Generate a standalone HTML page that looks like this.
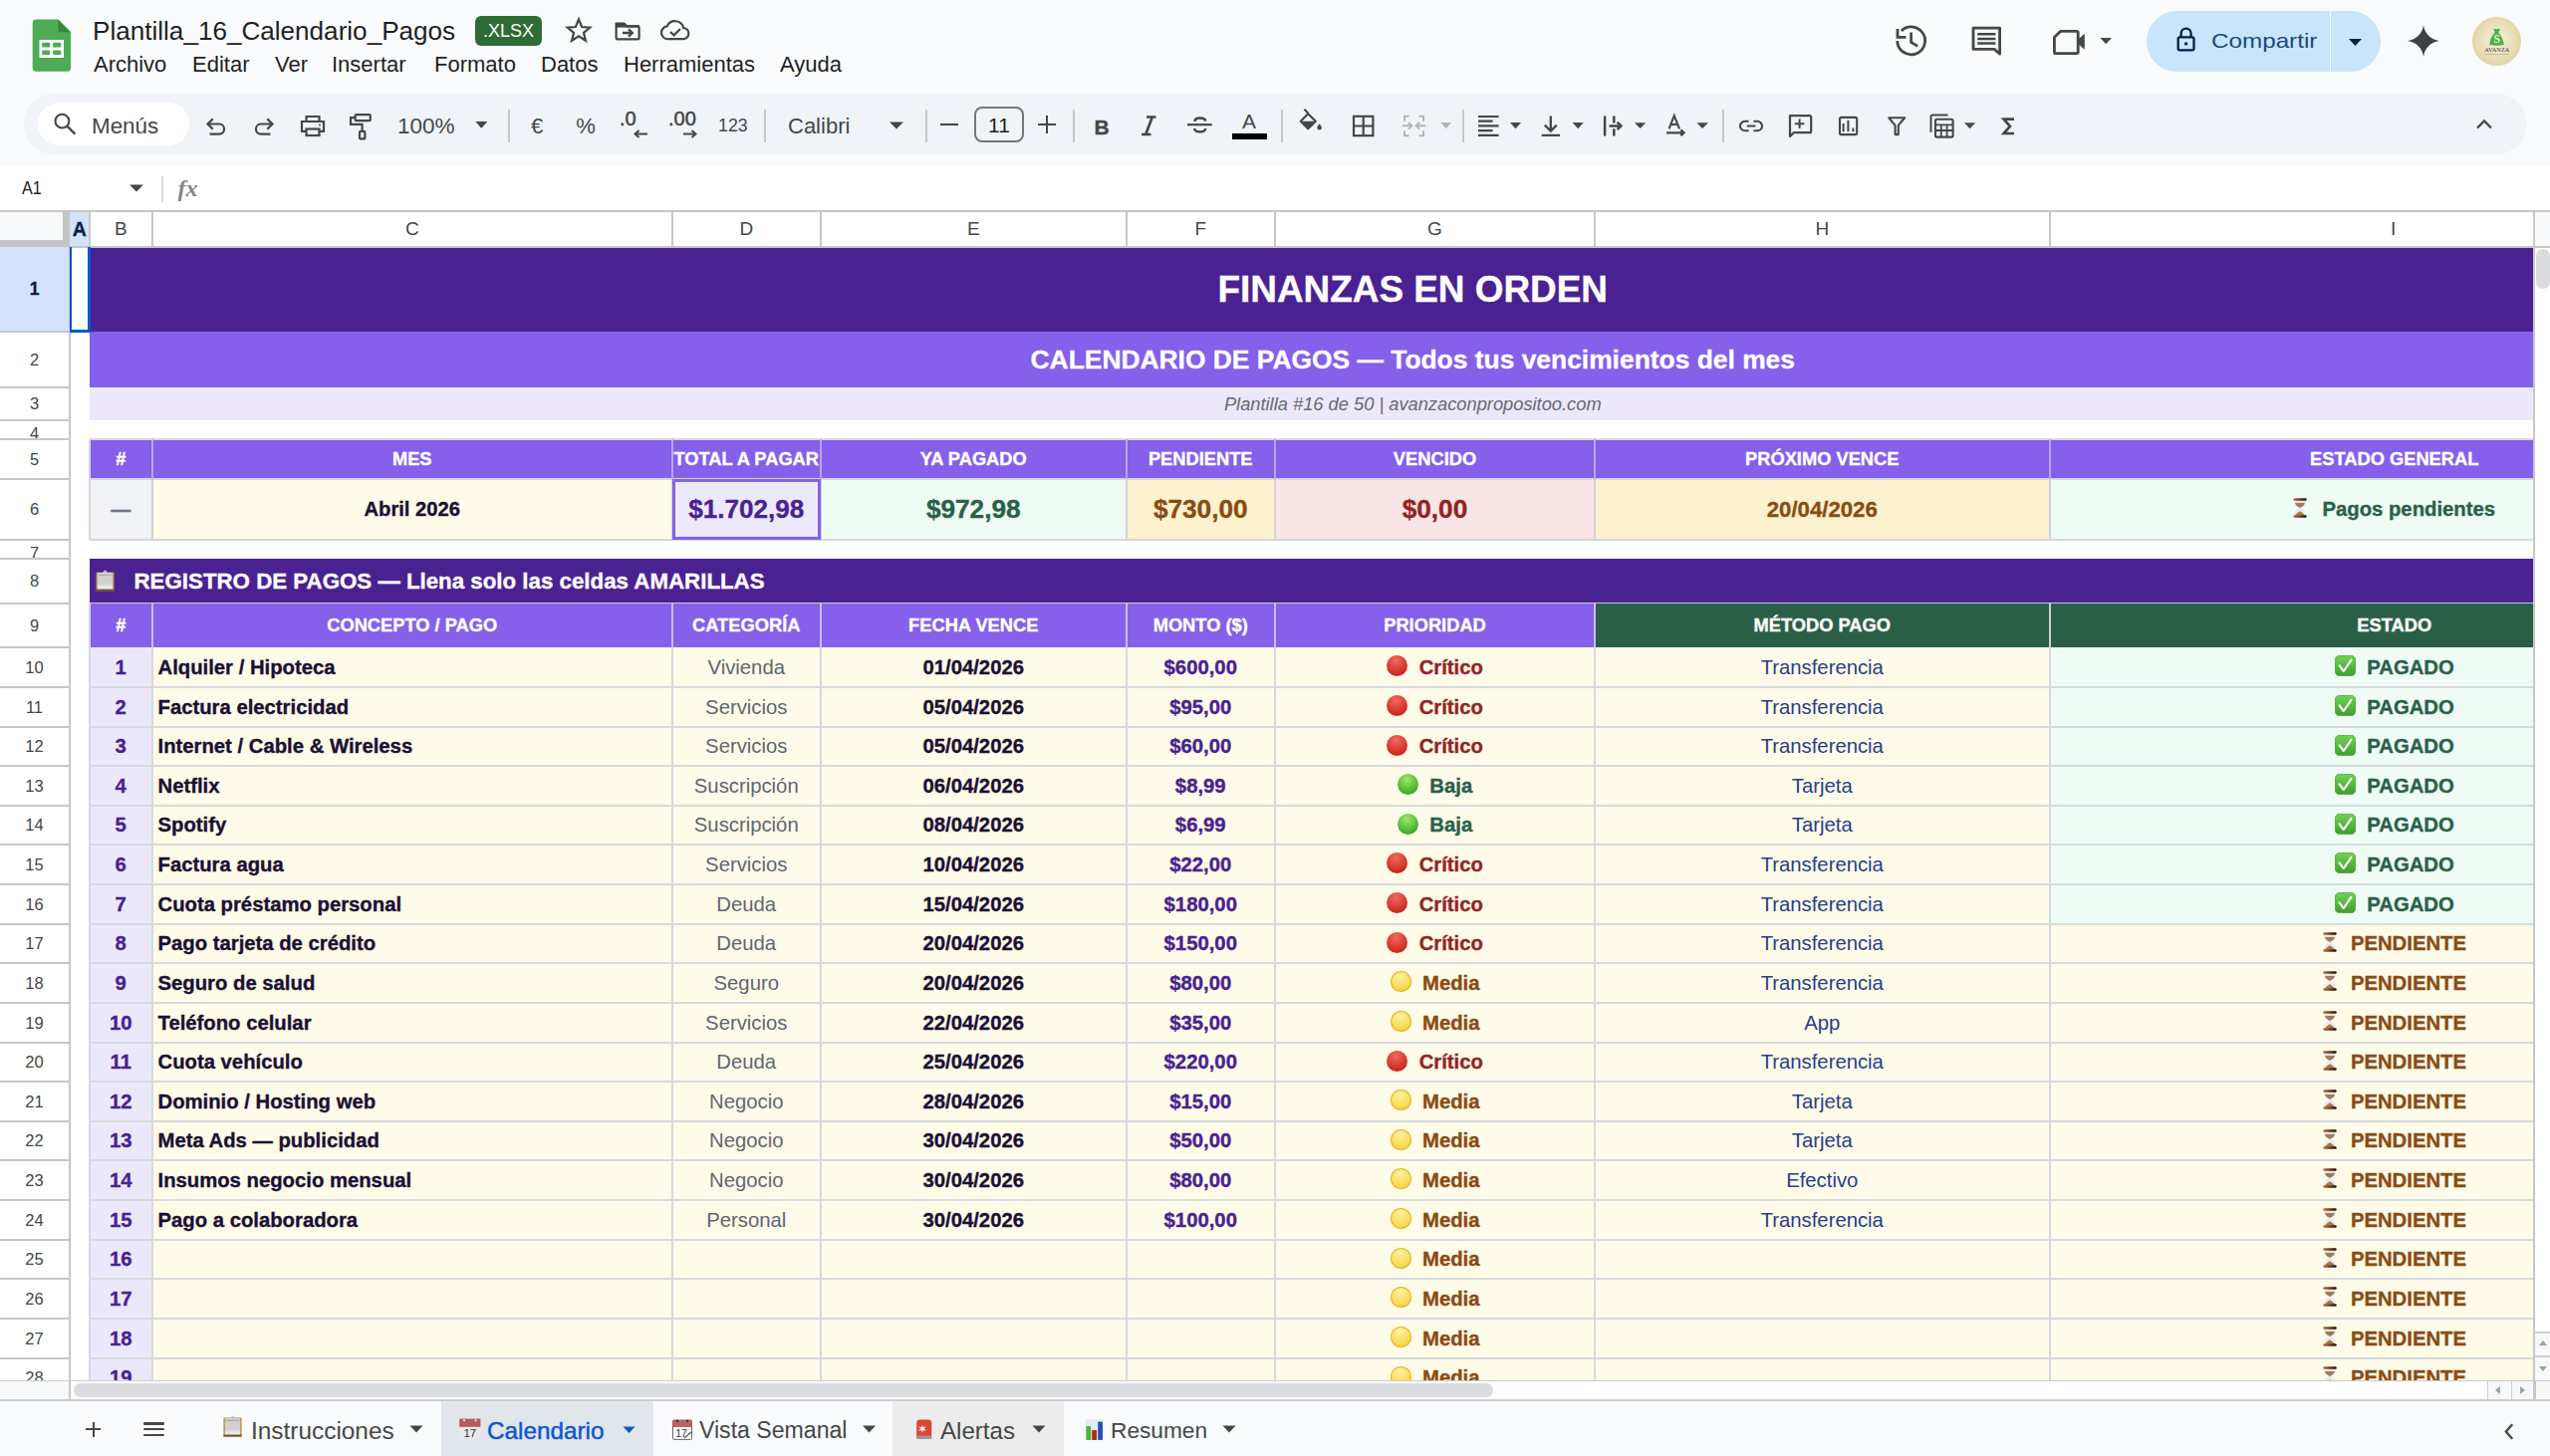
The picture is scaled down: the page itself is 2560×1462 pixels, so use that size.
<!DOCTYPE html><html><head><meta charset="utf-8"><style>html,body{margin:0;padding:0;width:2560px;height:1462px;overflow:hidden;background:#fff;}body{position:relative;font-family:'Liberation Sans', sans-serif;}div{box-sizing:border-box;}</style></head><body>
<div style="position:absolute;left:0px;top:0px;width:2560px;height:167px;background:#f9fbfd;"></div>
<svg style="position:absolute;left:32px;top:19px" width="40" height="54" viewBox="32 19 40 54"><path d="M36.3 19.4H58.3L71 32.2V68.2A3.6 3.6 0 0 1 67.4 71.8H36.3A3.6 3.6 0 0 1 32.7 68.2V23A3.6 3.6 0 0 1 36.3 19.4Z" fill="#4eab56"/><path d="M58.3 19.4L71 32.2H58.3Z" fill="#3a883b"/><rect x="39.5" y="40" width="24.5" height="18" fill="#fff"/><rect x="42.2" y="42.8" width="8" height="4.6" rx="0.5" fill="#4eab56"/><rect x="53.2" y="42.8" width="8" height="4.6" rx="0.5" fill="#4eab56"/><rect x="42.2" y="50.4" width="8" height="4.6" rx="0.5" fill="#4eab56"/><rect x="53.2" y="50.4" width="8" height="4.6" rx="0.5" fill="#4eab56"/></svg>
<div style="position:absolute;left:93px;top:12px;width:387px;height:38px;display:flex;align-items:center;justify-content:flex-start;font-family:'Liberation Sans', sans-serif;font-size:26.1px;color:#1f1f1f;font-weight:normal;white-space:nowrap;overflow:hidden;padding-left:0px;box-sizing:border-box;">Plantilla_16_Calendario_Pagos</div>
<div style="position:absolute;left:477px;top:16px;width:67px;height:30px;background:#2f6b35;border-radius:6px;"></div>
<div style="position:absolute;left:477px;top:16px;width:67px;height:31px;display:flex;align-items:center;justify-content:center;font-family:'Liberation Sans', sans-serif;font-size:18px;color:#fff;font-weight:normal;white-space:nowrap;overflow:hidden;padding-left:0px;box-sizing:border-box;">.XLSX</div>
<div style="position:absolute;left:94px;top:50px;width:201px;height:30px;display:flex;align-items:center;justify-content:flex-start;font-family:'Liberation Sans', sans-serif;font-size:22.0px;color:#1f1f1f;font-weight:normal;white-space:nowrap;overflow:hidden;padding-left:0px;box-sizing:border-box;">Archivo</div>
<div style="position:absolute;left:193px;top:50px;width:201px;height:30px;display:flex;align-items:center;justify-content:flex-start;font-family:'Liberation Sans', sans-serif;font-size:22.0px;color:#1f1f1f;font-weight:normal;white-space:nowrap;overflow:hidden;padding-left:0px;box-sizing:border-box;">Editar</div>
<div style="position:absolute;left:276px;top:50px;width:201px;height:30px;display:flex;align-items:center;justify-content:flex-start;font-family:'Liberation Sans', sans-serif;font-size:22.0px;color:#1f1f1f;font-weight:normal;white-space:nowrap;overflow:hidden;padding-left:0px;box-sizing:border-box;">Ver</div>
<div style="position:absolute;left:333px;top:50px;width:201px;height:30px;display:flex;align-items:center;justify-content:flex-start;font-family:'Liberation Sans', sans-serif;font-size:22.0px;color:#1f1f1f;font-weight:normal;white-space:nowrap;overflow:hidden;padding-left:0px;box-sizing:border-box;">Insertar</div>
<div style="position:absolute;left:436px;top:50px;width:201px;height:30px;display:flex;align-items:center;justify-content:flex-start;font-family:'Liberation Sans', sans-serif;font-size:22.0px;color:#1f1f1f;font-weight:normal;white-space:nowrap;overflow:hidden;padding-left:0px;box-sizing:border-box;">Formato</div>
<div style="position:absolute;left:543px;top:50px;width:201px;height:30px;display:flex;align-items:center;justify-content:flex-start;font-family:'Liberation Sans', sans-serif;font-size:22.0px;color:#1f1f1f;font-weight:normal;white-space:nowrap;overflow:hidden;padding-left:0px;box-sizing:border-box;">Datos</div>
<div style="position:absolute;left:626px;top:50px;width:201px;height:30px;display:flex;align-items:center;justify-content:flex-start;font-family:'Liberation Sans', sans-serif;font-size:22.0px;color:#1f1f1f;font-weight:normal;white-space:nowrap;overflow:hidden;padding-left:0px;box-sizing:border-box;">Herramientas</div>
<div style="position:absolute;left:783px;top:50px;width:201px;height:30px;display:flex;align-items:center;justify-content:flex-start;font-family:'Liberation Sans', sans-serif;font-size:22.0px;color:#1f1f1f;font-weight:normal;white-space:nowrap;overflow:hidden;padding-left:0px;box-sizing:border-box;">Ayuda</div>
<div style="position:absolute;left:2155px;top:11px;width:235px;height:61px;background:#c9e5fb;border-radius:31px;"></div>
<div style="position:absolute;left:2339px;top:11px;width:1.4px;height:61px;background:#f9fbfd;"></div>
<svg style="position:absolute;left:2150px;top:20px" width="60" height="40" viewBox="2150 20 60 40"><rect x="2186.7" y="37.4" width="15.8" height="13" rx="1.6" fill="none" stroke="#041e49" stroke-width="2.3"/><path d="M2189.6 37.4V33.6a5 5 0 0 1 10 0V37.4" fill="none" stroke="#041e49" stroke-width="2.3"/><circle cx="2194.6" cy="43.9" r="1.6" fill="#041e49"/></svg>
<div style="position:absolute;left:2219.6px;top:10px;width:115.40000000000009px;height:61px;display:flex;align-items:center;justify-content:flex-start;font-family:'Liberation Sans', sans-serif;font-size:20.9px;color:#1b4a7a;font-weight:normal;white-space:nowrap;overflow:hidden;padding-left:0px;box-sizing:border-box;transform:scaleX(1.16);transform-origin:0 50%;">Compartir</div>
<svg style="position:absolute;left:2358px;top:39px" width="13" height="7" viewBox="0 0 13 7"><path d="M0 0h13L6.5 7z" fill="#041e49"/></svg>
<svg style="position:absolute;left:2417px;top:25px" width="32" height="32" viewBox="0 0 24 24"><path d="M12 0C12.8 6.5 17.5 11.2 24 12 17.5 12.8 12.8 17.5 12 24 11.2 17.5 6.5 12.8 0 12 6.5 11.2 11.2 6.5 12 0z" fill="#3c4043"/></svg>
<div style="position:absolute;left:2482px;top:16.8px;width:49px;height:49px;border-radius:50%;background:radial-gradient(circle at 50% 48%,#f7f0de 0%,#e8dcb6 55%,#d3c18c 100%);"></div>
<svg style="position:absolute;left:2480px;top:14px" width="54" height="54" viewBox="2480 14 54 54"><path d="M2503.2 29.2c1.2-.6 2.2.4 3.3-.2 1.1.5 2.3-.4 3.4.4l-1.8 3.3c.8.2 1.2.6 1 1.2 2 1.6 3.6 5.4 4.9 11.1-3.6.9-10.6.9-14.6 0 .5-5.2 2-9.4 4.6-11.2-.3-.6.1-1 .9-1.2z" fill="#48b443"/><text x="2506.8" y="42.6" font-size="11.5" text-anchor="middle" fill="#f4fbf2" font-family="Liberation Serif" font-weight="bold">S</text><text x="2506.8" y="52.2" font-size="6.2" text-anchor="middle" fill="#3d3a33" font-family="Liberation Serif" textLength="25" lengthAdjust="spacingAndGlyphs">AVANZA</text><rect x="2495" y="54" width="23.5" height="0.8" fill="#b9ad8a"/></svg>
<div style="position:absolute;left:24px;top:94px;width:2513px;height:61px;background:#f0f4f9;border-radius:31px;"></div>
<div style="position:absolute;left:38px;top:103px;width:152px;height:43px;background:#fff;border-radius:22px;"></div>
<div style="position:absolute;left:92px;top:105px;width:98px;height:43px;display:flex;align-items:center;justify-content:flex-start;font-family:'Liberation Sans', sans-serif;font-size:22.4px;color:#444746;font-weight:normal;white-space:nowrap;overflow:hidden;padding-left:0px;box-sizing:border-box;">Menús</div>
<div style="position:absolute;left:399px;top:105px;width:71px;height:43px;display:flex;align-items:center;justify-content:flex-start;font-family:'Liberation Sans', sans-serif;font-size:22.5px;color:#444746;font-weight:normal;white-space:nowrap;overflow:hidden;padding-left:0px;box-sizing:border-box;">100%</div>
<div style="position:absolute;left:509.5px;top:110px;width:2px;height:33px;background:#c7c7c7;"></div>
<div style="position:absolute;left:767px;top:110px;width:2px;height:33px;background:#c7c7c7;"></div>
<div style="position:absolute;left:928.5px;top:110px;width:2px;height:33px;background:#c7c7c7;"></div>
<div style="position:absolute;left:1076.5px;top:110px;width:2px;height:33px;background:#c7c7c7;"></div>
<div style="position:absolute;left:1285.5px;top:110px;width:2px;height:33px;background:#c7c7c7;"></div>
<div style="position:absolute;left:1467.5px;top:110px;width:2px;height:33px;background:#c7c7c7;"></div>
<div style="position:absolute;left:1728.5px;top:110px;width:2px;height:33px;background:#c7c7c7;"></div>
<div style="position:absolute;left:522px;top:105px;width:34px;height:43px;display:flex;align-items:center;justify-content:center;font-family:'Liberation Sans', sans-serif;font-size:22px;color:#444746;font-weight:normal;white-space:nowrap;overflow:hidden;padding-left:0px;box-sizing:border-box;">€</div>
<div style="position:absolute;left:570px;top:105px;width:36px;height:43px;display:flex;align-items:center;justify-content:center;font-family:'Liberation Sans', sans-serif;font-size:22px;color:#444746;font-weight:normal;white-space:nowrap;overflow:hidden;padding-left:0px;box-sizing:border-box;">%</div>
<div style="position:absolute;left:622px;top:98px;width:58px;height:42px;display:flex;align-items:center;justify-content:flex-start;font-family:'Liberation Sans', sans-serif;font-size:20px;color:#444746;font-weight:normal;white-space:nowrap;overflow:hidden;padding-left:0px;box-sizing:border-box;-webkit-text-stroke:0.5px #444746;">.0</div>
<svg style="position:absolute;left:636.0px;top:130.0px" width="15" height="9" viewBox="0 0 15 9"><path d="M14 4.5H2M5.5 1L1.5 4.5 5.5 8" fill="none" stroke="#444746" stroke-width="2"/></svg>
<div style="position:absolute;left:671px;top:98px;width:59px;height:42px;display:flex;align-items:center;justify-content:flex-start;font-family:'Liberation Sans', sans-serif;font-size:20px;color:#444746;font-weight:normal;white-space:nowrap;overflow:hidden;padding-left:0px;box-sizing:border-box;-webkit-text-stroke:0.5px #444746;">.00</div>
<svg style="position:absolute;left:684.5px;top:130.0px" width="15" height="9" viewBox="0 0 15 9"><path d="M1 4.5h12M9.5 1l4 3.5-4 3.5" fill="none" stroke="#444746" stroke-width="2"/></svg>
<div style="position:absolute;left:721px;top:105px;width:39px;height:43px;display:flex;align-items:center;justify-content:flex-start;font-family:'Liberation Sans', sans-serif;font-size:17.8px;color:#444746;font-weight:normal;white-space:nowrap;overflow:hidden;padding-left:0px;box-sizing:border-box;">123</div>
<div style="position:absolute;left:791px;top:105px;width:89px;height:43px;display:flex;align-items:center;justify-content:flex-start;font-family:'Liberation Sans', sans-serif;font-size:22px;color:#444746;font-weight:normal;white-space:nowrap;overflow:hidden;padding-left:0px;box-sizing:border-box;">Calibri</div>
<svg style="position:absolute;left:893.0px;top:122.0px" width="14" height="8" viewBox="0 0 10 5"><path d="M0 0h10L5 5z" fill="#444746"/></svg>
<div style="position:absolute;left:944px;top:124px;width:18px;height:2.4px;background:#444746;"></div>
<div style="position:absolute;left:978px;top:107px;width:50px;height:36px;border:2px solid #747775;border-radius:8px;"></div>
<div style="position:absolute;left:978px;top:108px;width:50px;height:36px;display:flex;align-items:center;justify-content:center;font-family:'Liberation Sans', sans-serif;font-size:21px;color:#1f1f1f;font-weight:normal;white-space:nowrap;overflow:hidden;padding-left:0px;box-sizing:border-box;">11</div>
<div style="position:absolute;left:1042px;top:124px;width:18px;height:2.4px;background:#444746;"></div>
<div style="position:absolute;left:1050px;top:116px;width:2.4px;height:18px;background:#444746;"></div>
<div style="position:absolute;left:1090px;top:106px;width:32px;height:43px;display:flex;align-items:center;justify-content:center;font-family:'Liberation Sans', sans-serif;font-size:21px;color:#444746;font-weight:bold;white-space:nowrap;overflow:hidden;padding-left:0px;box-sizing:border-box;-webkit-text-stroke:0.35px #444746;">B</div>
<svg style="position:absolute;left:1185px;top:112px" width="40" height="28" viewBox="1185 112 40 28"><path d="M1192 125.2H1216.7" stroke="#444746" stroke-width="2.2"/><path d="M1210.2 121.6C1209.6 117.6 1199.8 117.4 1199.4 121.8" fill="none" stroke="#444746" stroke-width="2.6"/><path d="M1199.2 129C1199.6 133.6 1209.8 133.6 1210.2 129" fill="none" stroke="#444746" stroke-width="2.6"/></svg>
<div style="position:absolute;left:1238px;top:102px;width:32px;height:40px;display:flex;align-items:center;justify-content:center;font-family:'Liberation Sans', sans-serif;font-size:21px;color:#444746;font-weight:normal;white-space:nowrap;overflow:hidden;padding-left:0px;box-sizing:border-box;">A</div>
<div style="position:absolute;left:1237px;top:134px;width:35px;height:6px;background:#000;"></div>
<svg style="position:absolute;left:0;top:0" width="2560" height="160" viewBox="0 0 2560 160"><polygon points="581.00,19.40 584.06,26.99 592.22,27.55 585.95,32.81 587.94,40.75 581.00,36.40 574.06,40.75 576.05,32.81 569.78,27.55 577.94,26.99" fill="none" stroke="#444746" stroke-width="2.2" stroke-linejoin="miter"/><path d="M618.6 23.5h8l3 3h10.6a1.4 1.4 0 0 1 1.4 1.4V38a1.4 1.4 0 0 1-1.4 1.4H620a1.4 1.4 0 0 1-1.4-1.4z" fill="none" stroke="#444746" stroke-width="2.2"/><path d="M618.6 23.5h8l3 3h-11z" fill="#444746"/><rect x="618.6" y="25" width="23" height="2.6" fill="#444746"/><path d="M625 33h9.5M631 29.3l3.8 3.7-3.8 3.7" fill="none" stroke="#444746" stroke-width="2.4"/><path d="M671 39.2h14.5a5.6 5.6 0 0 0 .6-11.2 8.6 8.6 0 0 0-16.3-1.6 6.4 6.4 0 0 0 1.2 12.8z" fill="none" stroke="#444746" stroke-width="2.2"/><path d="M673 32l3.6 3.4 6.4-6.4" fill="none" stroke="#444746" stroke-width="2.2"/><path d="M1904.8 40.9A13.9 13.9 0 1 0 1908.9 31" fill="none" stroke="#444746" stroke-width="2.8"/><path d="M1905 29v8.4h8.4" fill="none" stroke="#444746" stroke-width="2.8"/><path d="M1918.6 32.4v10l6.6 4" fill="none" stroke="#444746" stroke-width="2.7"/><path d="M1981 28.2h26.6v26l-5.4-4.8H1981z" fill="none" stroke="#444746" stroke-width="2.8" stroke-linejoin="round"/><path d="M1985.2 34.3h18.2M1985.2 39h18.2M1985.2 43.5h18.2" stroke="#444746" stroke-width="2.6"/><path d="M2068.5 31.4h16.3a1.4 1.4 0 0 1 1.4 1.4v19.4a1.4 1.4 0 0 1-1.4 1.4h-21a1.4 1.4 0 0 1-1.4-1.4V37.6z" fill="none" stroke="#444746" stroke-width="2.8" stroke-linejoin="round"/><path d="M2086 39.8l6.8-6v16l-6.8-6z" fill="#444746"/><path d="M2108.4 38H2120L2114.2 44.2z" fill="#444746"/><circle cx="62.4" cy="121.6" r="6.9" fill="none" stroke="#444746" stroke-width="2.1"/><path d="M67.4 126.6l8 8" stroke="#444746" stroke-width="2.3"/><path d="M208.5 124.5H220a5.1 5.1 0 0 1 0 10.2h-9.5" fill="none" stroke="#444746" stroke-width="2.2"/><path d="M213.7 119.4l-5.2 5.1 5.2 5.1" fill="none" stroke="#444746" stroke-width="2.2"/><path d="M273.5 124.5H262a5.1 5.1 0 0 0 0 10.2h9.5" fill="none" stroke="#444746" stroke-width="2.2"/><path d="M268.3 119.4l5.2 5.1-5.2 5.1" fill="none" stroke="#444746" stroke-width="2.2"/><path d="M307.5 122V117h13v5M307.5 131.8h-4.5v-9.8h22v9.8h-4.5" fill="none" stroke="#444746" stroke-width="2.2"/><rect x="307.5" y="129.5" width="13" height="6.5" fill="none" stroke="#444746" stroke-width="2.2"/><circle cx="321" cy="125.4" r="1" fill="#444746"/><rect x="356.6" y="115.2" width="15.2" height="6" rx="1" fill="none" stroke="#444746" stroke-width="2.2"/><path d="M356.6 118.2H352v6.6h11.6v7" fill="none" stroke="#444746" stroke-width="2.2"/><rect x="361" y="131.8" width="5.4" height="7.6" rx="1" fill="none" stroke="#444746" stroke-width="2.2"/><path d="M477.3 122H489.3L483.3 128.7z" fill="#444746"/><path d="M1151 117.5h9.5M1146 135h9.5M1156.8 117.5l-6.6 17.5" fill="none" stroke="#444746" stroke-width="2.7"/><path d="M1313.2 114.3l7.6 7.4-7.6 7.4-7.4-7.4z" fill="none" stroke="#444746" stroke-width="2.2" stroke-linejoin="round"/><path d="M1305.8 121.7h15l-7.6 7.4z" fill="#444746"/><path d="M1309.5 109.8l4 4.2" stroke="#444746" stroke-width="2.2"/><path d="M1324.6 124.2c1.6 2 2.3 3 2.3 4a2.3 2.3 0 0 1-4.6 0c0-1 .7-2 2.3-4z" fill="#444746"/><rect x="1359" y="116.8" width="19.4" height="19.4" fill="none" stroke="#444746" stroke-width="2.2"/><path d="M1368.7 116.8v19.4M1359 126.5h19.4" stroke="#444746" stroke-width="2.2"/><path d="M1414.5 116.8h-4.5v5M1410 131.2v5h4.5M1424.5 116.8h4.5v5M1429 131.2v5h-4.5" fill="none" stroke="#b3b6b8" stroke-width="2"/><path d="M1407.8 126.3h9.2M1414 123l3.3 3.3-3.3 3.3M1431.2 126.3h-9.2M1425 123l-3.3 3.3 3.3 3.3" fill="none" stroke="#b3b6b8" stroke-width="2"/><path d="M1446.2 123H1457.2L1451.7 129.2z" fill="#b3b6b8"/><path d="M1484 117h20.6M1484 121.7h14.6M1484 126.4h20.6M1484 131.1h14.6M1484 135.8h20.6" stroke="#444746" stroke-width="2.2"/><path d="M1516 123H1527L1521.5 129.2z" fill="#444746"/><path d="M1556.8 116.4v15.5M1550.8 125.6l6 6 6-6M1547.7 135.9h18.3" fill="none" stroke="#444746" stroke-width="2.3"/><path d="M1578.7 123H1589.7L1584.2 129.2z" fill="#444746"/><path d="M1611.1 117.4v18M1620.3 117.4v5.2M1620.3 130.2v5.2" stroke="#444746" stroke-width="2.5" stroke-linecap="round"/><path d="M1615.5 126.4h11.5M1623.6 122.7l3.8 3.7-3.8 3.7" fill="none" stroke="#444746" stroke-width="2.5"/><path d="M1641 123.3H1652.2L1646.6 129.1z" fill="#444746"/><path d="M1675.6 129.4l5.2-13.3 5.2 13.3M1677.4 125h6.8" fill="none" stroke="#444746" stroke-width="2.1"/><path d="M1673 133.3h17.2M1687.4 130.4l3.1 2.9-3.1 2.9" fill="none" stroke="#444746" stroke-width="2.3"/><path d="M1703.3 123.3H1714.9L1709.1 129.1z" fill="#444746"/><path d="M1755.6 121.8h-3.9a4.7 4.7 0 0 0 0 9.4h3.9M1760.4 121.8h3.9a4.7 4.7 0 0 1 0 9.4h-3.9M1753.8 126.5h8.6" fill="none" stroke="#444746" stroke-width="2.1"/><path d="M1797 116.2h20a1.2 1.2 0 0 1 1.2 1.2v14.6a1.2 1.2 0 0 1-1.2 1.2h-16.3l-3.7 3.8z" fill="none" stroke="#444746" stroke-width="2.2" stroke-linejoin="round"/><path d="M1806.6 119.5v9.6M1801.8 124.3h9.6" stroke="#444746" stroke-width="2"/><rect x="1847" y="117.9" width="17.2" height="17.2" rx="1.6" fill="none" stroke="#444746" stroke-width="2.1"/><path d="M1850.6 123.9v8.4M1855.4 120.8v11.5M1860.4 128.4v3.9" stroke="#444746" stroke-width="2"/><path d="M1896.2 118.3h16l-6.4 7.6v9.2h-3.2v-9.2z" fill="none" stroke="#444746" stroke-width="2.1" stroke-linejoin="round"/><path d="M1938.5 132.8V117a1.6 1.6 0 0 1 1.6-1.6h15.4" fill="none" stroke="#444746" stroke-width="2"/><rect x="1943" y="119.8" width="17.6" height="17.8" rx="1.6" fill="none" stroke="#444746" stroke-width="2.1"/><path d="M1943 125.4h17.6M1943 131h17.6M1948.8 125.4v12.2M1954.6 125.4v12.2" stroke="#444746" stroke-width="1.8"/><path d="M1972 123.2H1983.2L1977.6 129.2z" fill="#444746"/><path d="M2022 119.6h-10.4l6.3 7.2-6.3 7.2h10.4" fill="none" stroke="#444746" stroke-width="2.7" stroke-linejoin="miter"/><path d="M2487 128.5l7-7 7 7" fill="none" stroke="#444746" stroke-width="2.3"/></svg>
<div style="position:absolute;left:0px;top:167px;width:2560px;height:44px;background:#fff;"></div>
<div style="position:absolute;left:21.5px;top:167px;width:58.5px;height:44px;display:flex;align-items:center;justify-content:flex-start;font-family:'Liberation Sans', sans-serif;font-size:19px;color:#1f1f1f;font-weight:normal;white-space:nowrap;overflow:hidden;padding-left:0px;box-sizing:border-box;transform:scaleX(0.85);transform-origin:0 50%;">A1</div>
<svg style="position:absolute;left:130.0px;top:185.0px" width="14" height="8" viewBox="0 0 10 5"><path d="M0 0h10L5 5z" fill="#444746"/></svg>
<div style="position:absolute;left:162px;top:177px;width:2px;height:26px;background:#dadce0;"></div>
<div style="position:absolute;left:178.5px;top:167px;width:36.5px;height:44px;display:flex;align-items:center;justify-content:flex-start;font-family:'Liberation Sans', sans-serif;font-size:24px;color:#80868b;font-weight:normal;white-space:nowrap;overflow:hidden;padding-left:0px;box-sizing:border-box;font-family:'Liberation Serif';font-style:italic;font-weight:bold;">fx</div>
<div style="position:absolute;left:0px;top:211px;width:2560px;height:2px;background:#c7c7c7;"></div>
<div style="position:absolute;left:0px;top:213px;width:2544px;height:35px;background:#fff;"></div>
<div style="position:absolute;left:0px;top:213px;width:63px;height:28px;background:#f8f9fa;"></div>
<div style="position:absolute;left:63px;top:213px;width:7px;height:35px;background:#c4c7c5;"></div>
<div style="position:absolute;left:0px;top:241px;width:70px;height:7px;background:#c4c7c5;"></div>
<div style="position:absolute;left:70px;top:213px;width:20px;height:35px;background:#d3e3fd;"></div>
<div style="position:absolute;left:70px;top:213px;width:19.5px;height:34px;display:flex;align-items:center;justify-content:center;font-family:'Liberation Sans', sans-serif;font-size:19.5px;color:#041e49;font-weight:bold;white-space:nowrap;overflow:hidden;padding-left:0px;box-sizing:border-box;-webkit-text-stroke:0.35px #041e49;">A</div>
<div style="position:absolute;left:89.5px;top:213px;width:63.5px;height:34px;display:flex;align-items:center;justify-content:center;font-family:'Liberation Sans', sans-serif;font-size:19px;color:#444746;font-weight:normal;white-space:nowrap;overflow:hidden;padding-left:0px;box-sizing:border-box;">B</div>
<div style="position:absolute;left:88.5px;top:213px;width:2px;height:35px;background:#c7c7c7;"></div>
<div style="position:absolute;left:153px;top:213px;width:521.5px;height:34px;display:flex;align-items:center;justify-content:center;font-family:'Liberation Sans', sans-serif;font-size:19px;color:#444746;font-weight:normal;white-space:nowrap;overflow:hidden;padding-left:0px;box-sizing:border-box;">C</div>
<div style="position:absolute;left:152px;top:213px;width:2px;height:35px;background:#c7c7c7;"></div>
<div style="position:absolute;left:674.5px;top:213px;width:149.5px;height:34px;display:flex;align-items:center;justify-content:center;font-family:'Liberation Sans', sans-serif;font-size:19px;color:#444746;font-weight:normal;white-space:nowrap;overflow:hidden;padding-left:0px;box-sizing:border-box;">D</div>
<div style="position:absolute;left:673.5px;top:213px;width:2px;height:35px;background:#c7c7c7;"></div>
<div style="position:absolute;left:824px;top:213px;width:306.5px;height:34px;display:flex;align-items:center;justify-content:center;font-family:'Liberation Sans', sans-serif;font-size:19px;color:#444746;font-weight:normal;white-space:nowrap;overflow:hidden;padding-left:0px;box-sizing:border-box;">E</div>
<div style="position:absolute;left:823px;top:213px;width:2px;height:35px;background:#c7c7c7;"></div>
<div style="position:absolute;left:1130.5px;top:213px;width:149.5px;height:34px;display:flex;align-items:center;justify-content:center;font-family:'Liberation Sans', sans-serif;font-size:19px;color:#444746;font-weight:normal;white-space:nowrap;overflow:hidden;padding-left:0px;box-sizing:border-box;">F</div>
<div style="position:absolute;left:1129.5px;top:213px;width:2px;height:35px;background:#c7c7c7;"></div>
<div style="position:absolute;left:1280px;top:213px;width:321px;height:34px;display:flex;align-items:center;justify-content:center;font-family:'Liberation Sans', sans-serif;font-size:19px;color:#444746;font-weight:normal;white-space:nowrap;overflow:hidden;padding-left:0px;box-sizing:border-box;">G</div>
<div style="position:absolute;left:1279px;top:213px;width:2px;height:35px;background:#c7c7c7;"></div>
<div style="position:absolute;left:1601px;top:213px;width:456.5px;height:34px;display:flex;align-items:center;justify-content:center;font-family:'Liberation Sans', sans-serif;font-size:19px;color:#444746;font-weight:normal;white-space:nowrap;overflow:hidden;padding-left:0px;box-sizing:border-box;">H</div>
<div style="position:absolute;left:1600px;top:213px;width:2px;height:35px;background:#c7c7c7;"></div>
<div style="position:absolute;left:2057.5px;top:213px;width:690.5px;height:34px;display:flex;align-items:center;justify-content:center;font-family:'Liberation Sans', sans-serif;font-size:19px;color:#444746;font-weight:normal;white-space:nowrap;overflow:hidden;padding-left:0px;box-sizing:border-box;">I</div>
<div style="position:absolute;left:2056.5px;top:213px;width:2px;height:35px;background:#c7c7c7;"></div>
<div style="position:absolute;left:2543px;top:213px;width:2px;height:35px;background:#c7c7c7;"></div>
<div style="position:absolute;left:0px;top:247px;width:2544px;height:2px;background:#c7c7c7;"></div>
<div style="position:absolute;left:0px;top:248px;width:70px;height:1138px;background:#fff;"></div>
<div style="position:absolute;left:0px;top:248px;width:69px;height:85px;background:#d3e3fd;"></div>
<div style="position:absolute;left:0px;top:248px;width:69px;height:85px;display:flex;align-items:center;justify-content:center;font-family:'Liberation Sans', sans-serif;font-size:17.5px;color:#041e49;font-weight:bold;white-space:nowrap;overflow:hidden;padding-left:0px;box-sizing:border-box;-webkit-text-stroke:0.35px #041e49;">1</div>
<div style="position:absolute;left:0px;top:332px;width:69px;height:2px;background:#c7c7c7;"></div>
<div style="position:absolute;left:0px;top:333px;width:69px;height:56px;display:flex;align-items:center;justify-content:center;font-family:'Liberation Sans', sans-serif;font-size:16.5px;color:#444746;font-weight:normal;white-space:nowrap;overflow:hidden;padding-left:0px;box-sizing:border-box;">2</div>
<div style="position:absolute;left:0px;top:388px;width:69px;height:2px;background:#c7c7c7;"></div>
<div style="position:absolute;left:0px;top:389px;width:69px;height:33px;display:flex;align-items:center;justify-content:center;font-family:'Liberation Sans', sans-serif;font-size:16.5px;color:#444746;font-weight:normal;white-space:nowrap;overflow:hidden;padding-left:0px;box-sizing:border-box;">3</div>
<div style="position:absolute;left:0px;top:421px;width:69px;height:2px;background:#c7c7c7;"></div>
<div style="position:absolute;left:0;top:422px;width:69px;height:19px;overflow:hidden">
<div style="position:absolute;left:0px;top:3.5px;width:69px;height:19px;display:flex;align-items:center;justify-content:center;font-family:'Liberation Sans', sans-serif;font-size:16.5px;color:#444746;font-weight:normal;white-space:nowrap;overflow:hidden;padding-left:0px;box-sizing:border-box;">4</div>
</div>
<div style="position:absolute;left:0px;top:440px;width:69px;height:2px;background:#c7c7c7;"></div>
<div style="position:absolute;left:0px;top:441px;width:69px;height:40px;display:flex;align-items:center;justify-content:center;font-family:'Liberation Sans', sans-serif;font-size:16.5px;color:#444746;font-weight:normal;white-space:nowrap;overflow:hidden;padding-left:0px;box-sizing:border-box;">5</div>
<div style="position:absolute;left:0px;top:480px;width:69px;height:2px;background:#c7c7c7;"></div>
<div style="position:absolute;left:0px;top:481px;width:69px;height:61px;display:flex;align-items:center;justify-content:center;font-family:'Liberation Sans', sans-serif;font-size:16.5px;color:#444746;font-weight:normal;white-space:nowrap;overflow:hidden;padding-left:0px;box-sizing:border-box;">6</div>
<div style="position:absolute;left:0px;top:541px;width:69px;height:2px;background:#c7c7c7;"></div>
<div style="position:absolute;left:0;top:542px;width:69px;height:19px;overflow:hidden">
<div style="position:absolute;left:0px;top:3.5px;width:69px;height:19px;display:flex;align-items:center;justify-content:center;font-family:'Liberation Sans', sans-serif;font-size:16.5px;color:#444746;font-weight:normal;white-space:nowrap;overflow:hidden;padding-left:0px;box-sizing:border-box;">7</div>
</div>
<div style="position:absolute;left:0px;top:560px;width:69px;height:2px;background:#c7c7c7;"></div>
<div style="position:absolute;left:0px;top:561px;width:69px;height:45px;display:flex;align-items:center;justify-content:center;font-family:'Liberation Sans', sans-serif;font-size:16.5px;color:#444746;font-weight:normal;white-space:nowrap;overflow:hidden;padding-left:0px;box-sizing:border-box;">8</div>
<div style="position:absolute;left:0px;top:605px;width:69px;height:2px;background:#c7c7c7;"></div>
<div style="position:absolute;left:0px;top:606px;width:69px;height:44px;display:flex;align-items:center;justify-content:center;font-family:'Liberation Sans', sans-serif;font-size:16.5px;color:#444746;font-weight:normal;white-space:nowrap;overflow:hidden;padding-left:0px;box-sizing:border-box;">9</div>
<div style="position:absolute;left:0px;top:649px;width:69px;height:2px;background:#c7c7c7;"></div>
<div style="position:absolute;left:0px;top:650px;width:69px;height:40px;display:flex;align-items:center;justify-content:center;font-family:'Liberation Sans', sans-serif;font-size:16.5px;color:#444746;font-weight:normal;white-space:nowrap;overflow:hidden;padding-left:0px;box-sizing:border-box;">10</div>
<div style="position:absolute;left:0px;top:689px;width:69px;height:2px;background:#c7c7c7;"></div>
<div style="position:absolute;left:0px;top:690px;width:69px;height:40px;display:flex;align-items:center;justify-content:center;font-family:'Liberation Sans', sans-serif;font-size:16.5px;color:#444746;font-weight:normal;white-space:nowrap;overflow:hidden;padding-left:0px;box-sizing:border-box;">11</div>
<div style="position:absolute;left:0px;top:729px;width:69px;height:2px;background:#c7c7c7;"></div>
<div style="position:absolute;left:0px;top:730px;width:69px;height:39px;display:flex;align-items:center;justify-content:center;font-family:'Liberation Sans', sans-serif;font-size:16.5px;color:#444746;font-weight:normal;white-space:nowrap;overflow:hidden;padding-left:0px;box-sizing:border-box;">12</div>
<div style="position:absolute;left:0px;top:768px;width:69px;height:2px;background:#c7c7c7;"></div>
<div style="position:absolute;left:0px;top:769px;width:69px;height:40px;display:flex;align-items:center;justify-content:center;font-family:'Liberation Sans', sans-serif;font-size:16.5px;color:#444746;font-weight:normal;white-space:nowrap;overflow:hidden;padding-left:0px;box-sizing:border-box;">13</div>
<div style="position:absolute;left:0px;top:808px;width:69px;height:2px;background:#c7c7c7;"></div>
<div style="position:absolute;left:0px;top:809px;width:69px;height:39px;display:flex;align-items:center;justify-content:center;font-family:'Liberation Sans', sans-serif;font-size:16.5px;color:#444746;font-weight:normal;white-space:nowrap;overflow:hidden;padding-left:0px;box-sizing:border-box;">14</div>
<div style="position:absolute;left:0px;top:847px;width:69px;height:2px;background:#c7c7c7;"></div>
<div style="position:absolute;left:0px;top:848px;width:69px;height:40px;display:flex;align-items:center;justify-content:center;font-family:'Liberation Sans', sans-serif;font-size:16.5px;color:#444746;font-weight:normal;white-space:nowrap;overflow:hidden;padding-left:0px;box-sizing:border-box;">15</div>
<div style="position:absolute;left:0px;top:887px;width:69px;height:2px;background:#c7c7c7;"></div>
<div style="position:absolute;left:0px;top:888px;width:69px;height:40px;display:flex;align-items:center;justify-content:center;font-family:'Liberation Sans', sans-serif;font-size:16.5px;color:#444746;font-weight:normal;white-space:nowrap;overflow:hidden;padding-left:0px;box-sizing:border-box;">16</div>
<div style="position:absolute;left:0px;top:927px;width:69px;height:2px;background:#c7c7c7;"></div>
<div style="position:absolute;left:0px;top:928px;width:69px;height:39px;display:flex;align-items:center;justify-content:center;font-family:'Liberation Sans', sans-serif;font-size:16.5px;color:#444746;font-weight:normal;white-space:nowrap;overflow:hidden;padding-left:0px;box-sizing:border-box;">17</div>
<div style="position:absolute;left:0px;top:966px;width:69px;height:2px;background:#c7c7c7;"></div>
<div style="position:absolute;left:0px;top:967px;width:69px;height:40px;display:flex;align-items:center;justify-content:center;font-family:'Liberation Sans', sans-serif;font-size:16.5px;color:#444746;font-weight:normal;white-space:nowrap;overflow:hidden;padding-left:0px;box-sizing:border-box;">18</div>
<div style="position:absolute;left:0px;top:1006px;width:69px;height:2px;background:#c7c7c7;"></div>
<div style="position:absolute;left:0px;top:1007px;width:69px;height:40px;display:flex;align-items:center;justify-content:center;font-family:'Liberation Sans', sans-serif;font-size:16.5px;color:#444746;font-weight:normal;white-space:nowrap;overflow:hidden;padding-left:0px;box-sizing:border-box;">19</div>
<div style="position:absolute;left:0px;top:1046px;width:69px;height:2px;background:#c7c7c7;"></div>
<div style="position:absolute;left:0px;top:1047px;width:69px;height:39px;display:flex;align-items:center;justify-content:center;font-family:'Liberation Sans', sans-serif;font-size:16.5px;color:#444746;font-weight:normal;white-space:nowrap;overflow:hidden;padding-left:0px;box-sizing:border-box;">20</div>
<div style="position:absolute;left:0px;top:1085px;width:69px;height:2px;background:#c7c7c7;"></div>
<div style="position:absolute;left:0px;top:1086px;width:69px;height:40px;display:flex;align-items:center;justify-content:center;font-family:'Liberation Sans', sans-serif;font-size:16.5px;color:#444746;font-weight:normal;white-space:nowrap;overflow:hidden;padding-left:0px;box-sizing:border-box;">21</div>
<div style="position:absolute;left:0px;top:1125px;width:69px;height:2px;background:#c7c7c7;"></div>
<div style="position:absolute;left:0px;top:1126px;width:69px;height:39px;display:flex;align-items:center;justify-content:center;font-family:'Liberation Sans', sans-serif;font-size:16.5px;color:#444746;font-weight:normal;white-space:nowrap;overflow:hidden;padding-left:0px;box-sizing:border-box;">22</div>
<div style="position:absolute;left:0px;top:1164px;width:69px;height:2px;background:#c7c7c7;"></div>
<div style="position:absolute;left:0px;top:1165px;width:69px;height:40px;display:flex;align-items:center;justify-content:center;font-family:'Liberation Sans', sans-serif;font-size:16.5px;color:#444746;font-weight:normal;white-space:nowrap;overflow:hidden;padding-left:0px;box-sizing:border-box;">23</div>
<div style="position:absolute;left:0px;top:1204px;width:69px;height:2px;background:#c7c7c7;"></div>
<div style="position:absolute;left:0px;top:1205px;width:69px;height:40px;display:flex;align-items:center;justify-content:center;font-family:'Liberation Sans', sans-serif;font-size:16.5px;color:#444746;font-weight:normal;white-space:nowrap;overflow:hidden;padding-left:0px;box-sizing:border-box;">24</div>
<div style="position:absolute;left:0px;top:1244px;width:69px;height:2px;background:#c7c7c7;"></div>
<div style="position:absolute;left:0px;top:1245px;width:69px;height:39px;display:flex;align-items:center;justify-content:center;font-family:'Liberation Sans', sans-serif;font-size:16.5px;color:#444746;font-weight:normal;white-space:nowrap;overflow:hidden;padding-left:0px;box-sizing:border-box;">25</div>
<div style="position:absolute;left:0px;top:1283px;width:69px;height:2px;background:#c7c7c7;"></div>
<div style="position:absolute;left:0px;top:1284px;width:69px;height:40px;display:flex;align-items:center;justify-content:center;font-family:'Liberation Sans', sans-serif;font-size:16.5px;color:#444746;font-weight:normal;white-space:nowrap;overflow:hidden;padding-left:0px;box-sizing:border-box;">26</div>
<div style="position:absolute;left:0px;top:1323px;width:69px;height:2px;background:#c7c7c7;"></div>
<div style="position:absolute;left:0px;top:1324px;width:69px;height:40px;display:flex;align-items:center;justify-content:center;font-family:'Liberation Sans', sans-serif;font-size:16.5px;color:#444746;font-weight:normal;white-space:nowrap;overflow:hidden;padding-left:0px;box-sizing:border-box;">27</div>
<div style="position:absolute;left:0px;top:1363px;width:69px;height:2px;background:#c7c7c7;"></div>
<div style="position:absolute;left:0;top:1364px;width:69px;height:22px;overflow:hidden">
<div style="position:absolute;left:0px;top:0px;width:69px;height:39px;display:flex;align-items:center;justify-content:center;font-family:'Liberation Sans', sans-serif;font-size:16.5px;color:#444746;font-weight:normal;white-space:nowrap;overflow:hidden;padding-left:0px;box-sizing:border-box;">28</div>
</div>
<div style="position:absolute;left:69px;top:248px;width:2px;height:1138px;background:#c7c7c7;"></div>
<div style="position:absolute;left:71px;top:249px;width:2472px;height:1137px;overflow:hidden;">
<div style="position:absolute;left:-71px;top:-249px;width:2800px;height:1500px;">
<div style="position:absolute;left:89.5px;top:248px;width:2660.5px;height:85px;background:#4a2191;"></div>
<div style="position:absolute;left:89.5px;top:333px;width:2660.5px;height:56px;background:#8560ea;"></div>
<div style="position:absolute;left:89.5px;top:389px;width:2660.5px;height:33px;background:#ece7fb;"></div>
<div style="position:absolute;left:89.5px;top:248px;width:2657.5px;height:85px;display:flex;align-items:center;justify-content:center;font-family:'Liberation Sans', sans-serif;font-size:36.9px;color:#fff;font-weight:bold;white-space:nowrap;overflow:hidden;padding-left:0px;box-sizing:border-box;-webkit-text-stroke:0.35px #fff;">FINANZAS EN ORDEN</div>
<div style="position:absolute;left:89.5px;top:333px;width:2657.5px;height:56px;display:flex;align-items:center;justify-content:center;font-family:'Liberation Sans', sans-serif;font-size:26.4px;color:#fff;font-weight:bold;white-space:nowrap;overflow:hidden;padding-left:0px;box-sizing:border-box;-webkit-text-stroke:0.35px #fff;">CALENDARIO DE PAGOS — Todos tus vencimientos del mes</div>
<div style="position:absolute;left:89.5px;top:389px;width:2657.5px;height:33px;display:flex;align-items:center;justify-content:center;font-family:'Liberation Sans', sans-serif;font-size:18.3px;color:#666a73;font-weight:normal;white-space:nowrap;overflow:hidden;padding-left:0px;box-sizing:border-box;font-style:italic;">Plantilla #16 de 50 | avanzaconpropositoo.com</div>
<div style="position:absolute;left:89.5px;top:441px;width:2660.5px;height:40px;background:#8560ea;"></div>
<div style="position:absolute;left:89.5px;top:441px;width:63.5px;height:40px;display:flex;align-items:center;justify-content:center;font-family:'Liberation Sans', sans-serif;font-size:18.3px;color:#fff;font-weight:bold;white-space:nowrap;overflow:hidden;padding-left:0px;box-sizing:border-box;-webkit-text-stroke:0.35px #fff;">#</div>
<div style="position:absolute;left:153px;top:441px;width:521.5px;height:40px;display:flex;align-items:center;justify-content:center;font-family:'Liberation Sans', sans-serif;font-size:18.3px;color:#fff;font-weight:bold;white-space:nowrap;overflow:hidden;padding-left:0px;box-sizing:border-box;-webkit-text-stroke:0.35px #fff;">MES</div>
<div style="position:absolute;left:674.5px;top:441px;width:149.5px;height:40px;display:flex;align-items:center;justify-content:center;font-family:'Liberation Sans', sans-serif;font-size:18.3px;color:#fff;font-weight:bold;white-space:nowrap;overflow:hidden;padding-left:0px;box-sizing:border-box;-webkit-text-stroke:0.35px #fff;">TOTAL A PAGAR</div>
<div style="position:absolute;left:824px;top:441px;width:306.5px;height:40px;display:flex;align-items:center;justify-content:center;font-family:'Liberation Sans', sans-serif;font-size:18.3px;color:#fff;font-weight:bold;white-space:nowrap;overflow:hidden;padding-left:0px;box-sizing:border-box;-webkit-text-stroke:0.35px #fff;">YA PAGADO</div>
<div style="position:absolute;left:1130.5px;top:441px;width:149.5px;height:40px;display:flex;align-items:center;justify-content:center;font-family:'Liberation Sans', sans-serif;font-size:18.3px;color:#fff;font-weight:bold;white-space:nowrap;overflow:hidden;padding-left:0px;box-sizing:border-box;-webkit-text-stroke:0.35px #fff;">PENDIENTE</div>
<div style="position:absolute;left:1280px;top:441px;width:321px;height:40px;display:flex;align-items:center;justify-content:center;font-family:'Liberation Sans', sans-serif;font-size:18.3px;color:#fff;font-weight:bold;white-space:nowrap;overflow:hidden;padding-left:0px;box-sizing:border-box;-webkit-text-stroke:0.35px #fff;">VENCIDO</div>
<div style="position:absolute;left:1601px;top:441px;width:456.5px;height:40px;display:flex;align-items:center;justify-content:center;font-family:'Liberation Sans', sans-serif;font-size:18.3px;color:#fff;font-weight:bold;white-space:nowrap;overflow:hidden;padding-left:0px;box-sizing:border-box;-webkit-text-stroke:0.35px #fff;">PRÓXIMO VENCE</div>
<div style="position:absolute;left:2057.5px;top:441px;width:692.5px;height:40px;display:flex;align-items:center;justify-content:center;font-family:'Liberation Sans', sans-serif;font-size:18.3px;color:#fff;font-weight:bold;white-space:nowrap;overflow:hidden;padding-left:0px;box-sizing:border-box;-webkit-text-stroke:0.35px #fff;">ESTADO GENERAL</div>
<div style="position:absolute;left:89.5px;top:481px;width:63.5px;height:61px;background:#f1f2f5;"></div>
<div style="position:absolute;left:153px;top:481px;width:521.5px;height:61px;background:#fefbe8;"></div>
<div style="position:absolute;left:674.5px;top:481px;width:149.5px;height:61px;background:#ede9fc;"></div>
<div style="position:absolute;left:824px;top:481px;width:306.5px;height:61px;background:#effcf6;"></div>
<div style="position:absolute;left:1130.5px;top:481px;width:149.5px;height:61px;background:#fcf2cd;"></div>
<div style="position:absolute;left:1280px;top:481px;width:321px;height:61px;background:#f9e5e5;"></div>
<div style="position:absolute;left:1601px;top:481px;width:456.5px;height:61px;background:#fcf2cd;"></div>
<div style="position:absolute;left:2057.5px;top:481px;width:692.5px;height:61px;background:#effcf6;"></div>
<div style="position:absolute;left:89.5px;top:440.0px;width:2660.5px;height:2px;background:#d5d7dc;"></div>
<div style="position:absolute;left:89.5px;top:480.0px;width:2660.5px;height:2px;background:#d5d7dc;"></div>
<div style="position:absolute;left:89.5px;top:541.0px;width:2660.5px;height:2px;background:#d5d7dc;"></div>
<div style="position:absolute;left:88.5px;top:441px;width:2px;height:101px;background:#d0d2d8;"></div>
<div style="position:absolute;left:152.0px;top:441px;width:2px;height:101px;background:#d0d2d8;"></div>
<div style="position:absolute;left:673.5px;top:441px;width:2px;height:101px;background:#d0d2d8;"></div>
<div style="position:absolute;left:823.0px;top:441px;width:2px;height:101px;background:#d0d2d8;"></div>
<div style="position:absolute;left:1129.5px;top:441px;width:2px;height:101px;background:#d0d2d8;"></div>
<div style="position:absolute;left:1279.0px;top:441px;width:2px;height:101px;background:#d0d2d8;"></div>
<div style="position:absolute;left:1600.0px;top:441px;width:2px;height:101px;background:#d0d2d8;"></div>
<div style="position:absolute;left:2056.5px;top:441px;width:2px;height:101px;background:#d0d2d8;"></div>
<div style="position:absolute;left:152.0px;top:441px;width:2px;height:40px;background:#b9a6f2;"></div>
<div style="position:absolute;left:673.5px;top:441px;width:2px;height:40px;background:#b9a6f2;"></div>
<div style="position:absolute;left:823.0px;top:441px;width:2px;height:40px;background:#b9a6f2;"></div>
<div style="position:absolute;left:1129.5px;top:441px;width:2px;height:40px;background:#b9a6f2;"></div>
<div style="position:absolute;left:1279.0px;top:441px;width:2px;height:40px;background:#b9a6f2;"></div>
<div style="position:absolute;left:1600.0px;top:441px;width:2px;height:40px;background:#b9a6f2;"></div>
<div style="position:absolute;left:2056.5px;top:441px;width:2px;height:40px;background:#b9a6f2;"></div>
<div style="position:absolute;left:88.5px;top:441px;width:2px;height:101px;background:#d5d7dc;"></div>
<div style="position:absolute;left:674.5px;top:481px;width:149.5px;height:61px;border:3px solid #8560ea;"></div>
<div style="position:absolute;left:89.5px;top:481px;width:63.5px;height:61px;display:flex;align-items:center;justify-content:center;font-family:'Liberation Sans', sans-serif;font-size:20px;color:#6f7686;font-weight:bold;white-space:nowrap;overflow:hidden;padding-left:0px;box-sizing:border-box;-webkit-text-stroke:0.35px #6f7686;">—</div>
<div style="position:absolute;left:153px;top:481px;width:521.5px;height:61px;display:flex;align-items:center;justify-content:center;font-family:'Liberation Sans', sans-serif;font-size:20.2px;color:#1b1034;font-weight:bold;white-space:nowrap;overflow:hidden;padding-left:0px;box-sizing:border-box;-webkit-text-stroke:0.35px #1b1034;">Abril 2026</div>
<div style="position:absolute;left:674.5px;top:481px;width:149.5px;height:61px;display:flex;align-items:center;justify-content:center;font-family:'Liberation Sans', sans-serif;font-size:26.1px;color:#4a2191;font-weight:bold;white-space:nowrap;overflow:hidden;padding-left:0px;box-sizing:border-box;-webkit-text-stroke:0.35px #4a2191;">$1.702,98</div>
<div style="position:absolute;left:824px;top:481px;width:306.5px;height:61px;display:flex;align-items:center;justify-content:center;font-family:'Liberation Sans', sans-serif;font-size:26.2px;color:#2a6049;font-weight:bold;white-space:nowrap;overflow:hidden;padding-left:0px;box-sizing:border-box;-webkit-text-stroke:0.35px #2a6049;">$972,98</div>
<div style="position:absolute;left:1130.5px;top:481px;width:149.5px;height:61px;display:flex;align-items:center;justify-content:center;font-family:'Liberation Sans', sans-serif;font-size:26.2px;color:#8a4b14;font-weight:bold;white-space:nowrap;overflow:hidden;padding-left:0px;box-sizing:border-box;-webkit-text-stroke:0.35px #8a4b14;">$730,00</div>
<div style="position:absolute;left:1280px;top:481px;width:321px;height:61px;display:flex;align-items:center;justify-content:center;font-family:'Liberation Sans', sans-serif;font-size:26.2px;color:#922424;font-weight:bold;white-space:nowrap;overflow:hidden;padding-left:0px;box-sizing:border-box;-webkit-text-stroke:0.35px #922424;">$0,00</div>
<div style="position:absolute;left:1601px;top:481px;width:456.5px;height:61px;display:flex;align-items:center;justify-content:center;font-family:'Liberation Sans', sans-serif;font-size:22.2px;color:#8a4b14;font-weight:bold;white-space:nowrap;overflow:hidden;padding-left:0px;box-sizing:border-box;-webkit-text-stroke:0.35px #8a4b14;">20/04/2026</div>
<div style="position:absolute;left:2057.5px;top:481px;width:692.5px;height:61px;display:flex;align-items:center;justify-content:center;font-family:'Liberation Sans', sans-serif;font-size:20.3px;color:#2a6049;font-weight:bold;white-space:nowrap;overflow:hidden;padding-left:0px;box-sizing:border-box;-webkit-text-stroke:0.35px #2a6049;"><svg width="14.00" height="20" viewBox="0 0 14 20" style="flex:none;position:relative;top:-1.6px"><defs><linearGradient id="hg1" x1="0" x2="1"><stop offset="0" stop-color="#b8734a"/><stop offset="0.55" stop-color="#6a3416"/><stop offset="1" stop-color="#1e0600"/></linearGradient></defs><path d="M1.4 2.6H12.6C12.8 6.6 11.4 8.2 7.7 10H6.3C2.6 8.2 1.2 6.6 1.4 2.6z" fill="#e6e4e0"/><path d="M2.1 5H11.9C11.6 7 10.6 8.2 7.5 9.7H6.5C3.4 8.2 2.4 7 2.1 5z" fill="#9c7d5c"/><path d="M6.3 10H7.7C11.4 11.8 12.8 13.4 12.6 17.4H1.4C1.2 13.4 2.6 11.8 6.3 10z" fill="#eceaf3"/><path d="M7 13.2C8.8 14.6 11 15.8 11.8 17.4H2.2C3 15.8 5.2 14.6 7 13.2z" fill="#a47a44"/><rect x="0.3" y="0.2" width="13.4" height="2.6" rx="1.2" fill="url(#hg1)"/><rect x="0.3" y="17.2" width="13.4" height="2.6" rx="1.2" fill="url(#hg1)"/></svg><span style="margin-left:15px">Pagos pendientes</span></div>
<div style="position:absolute;left:89.5px;top:561px;width:2660.5px;height:45px;background:#4a2191;"></div>
<div style="position:absolute;left:89.5px;top:605.0px;width:2660.5px;height:2px;background:#c9cbd3;"></div>
<div style="position:absolute;left:96.0px;top:561px;width:2654.0px;height:45px;display:flex;align-items:center;justify-content:flex-start;font-family:'Liberation Sans', sans-serif;font-size:22.3px;color:#fff;font-weight:bold;white-space:nowrap;overflow:hidden;padding-left:0px;box-sizing:border-box;-webkit-text-stroke:0.35px #fff;"><svg width="19" height="22" viewBox="0 0 19 22" style="flex:none;position:relative;top:-1px"><defs><linearGradient id="pg2" x1="0" y1="0" x2="0" y2="1"><stop offset="0" stop-color="#d0d0d0"/><stop offset="0.6" stop-color="#cfcfcf"/><stop offset="1" stop-color="#f4f4f4"/></linearGradient></defs><rect x="0.4" y="2.4" width="18.2" height="19.2" rx="1.2" fill="#b58c4c"/><rect x="1.8" y="3.4" width="15.4" height="16.4" fill="url(#pg2)"/><rect x="0.4" y="19.6" width="18.2" height="2" fill="#6e5436"/><path d="M6.5 3.6L9.5 0.2 12.5 3.6z" fill="#c6c2d6"/><rect x="2.5" y="3.4" width="14" height="1.4" fill="#d8dadb"/><rect x="2.5" y="4.8" width="14" height="0.9" fill="#9c9a96"/></svg><span style="margin-left:19.5px">REGISTRO DE PAGOS — Llena solo las celdas AMARILLAS</span></div>
<div style="position:absolute;left:89.5px;top:606px;width:1511.5px;height:44px;background:#8560ea;"></div>
<div style="position:absolute;left:1601px;top:606px;width:1149px;height:44px;background:#2b5e47;"></div>
<div style="position:absolute;left:89.5px;top:606px;width:63.5px;height:44px;display:flex;align-items:center;justify-content:center;font-family:'Liberation Sans', sans-serif;font-size:18.3px;color:#fff;font-weight:bold;white-space:nowrap;overflow:hidden;padding-left:0px;box-sizing:border-box;-webkit-text-stroke:0.35px #fff;">#</div>
<div style="position:absolute;left:153px;top:606px;width:521.5px;height:44px;display:flex;align-items:center;justify-content:center;font-family:'Liberation Sans', sans-serif;font-size:18.3px;color:#fff;font-weight:bold;white-space:nowrap;overflow:hidden;padding-left:0px;box-sizing:border-box;-webkit-text-stroke:0.35px #fff;">CONCEPTO / PAGO</div>
<div style="position:absolute;left:674.5px;top:606px;width:149.5px;height:44px;display:flex;align-items:center;justify-content:center;font-family:'Liberation Sans', sans-serif;font-size:18.3px;color:#fff;font-weight:bold;white-space:nowrap;overflow:hidden;padding-left:0px;box-sizing:border-box;-webkit-text-stroke:0.35px #fff;">CATEGORÍA</div>
<div style="position:absolute;left:824px;top:606px;width:306.5px;height:44px;display:flex;align-items:center;justify-content:center;font-family:'Liberation Sans', sans-serif;font-size:18.3px;color:#fff;font-weight:bold;white-space:nowrap;overflow:hidden;padding-left:0px;box-sizing:border-box;-webkit-text-stroke:0.35px #fff;">FECHA VENCE</div>
<div style="position:absolute;left:1130.5px;top:606px;width:149.5px;height:44px;display:flex;align-items:center;justify-content:center;font-family:'Liberation Sans', sans-serif;font-size:18.3px;color:#fff;font-weight:bold;white-space:nowrap;overflow:hidden;padding-left:0px;box-sizing:border-box;-webkit-text-stroke:0.35px #fff;">MONTO ($)</div>
<div style="position:absolute;left:1280px;top:606px;width:321px;height:44px;display:flex;align-items:center;justify-content:center;font-family:'Liberation Sans', sans-serif;font-size:18.3px;color:#fff;font-weight:bold;white-space:nowrap;overflow:hidden;padding-left:0px;box-sizing:border-box;-webkit-text-stroke:0.35px #fff;">PRIORIDAD</div>
<div style="position:absolute;left:1601px;top:606px;width:456.5px;height:44px;display:flex;align-items:center;justify-content:center;font-family:'Liberation Sans', sans-serif;font-size:18.3px;color:#fff;font-weight:bold;white-space:nowrap;overflow:hidden;padding-left:0px;box-sizing:border-box;-webkit-text-stroke:0.35px #fff;">MÉTODO PAGO</div>
<div style="position:absolute;left:2057.5px;top:606px;width:692.5px;height:44px;display:flex;align-items:center;justify-content:center;font-family:'Liberation Sans', sans-serif;font-size:18.3px;color:#fff;font-weight:bold;white-space:nowrap;overflow:hidden;padding-left:0px;box-sizing:border-box;-webkit-text-stroke:0.35px #fff;">ESTADO</div>
<div style="position:absolute;left:152.0px;top:606px;width:2px;height:44px;background:#c9bdf0;"></div>
<div style="position:absolute;left:673.5px;top:606px;width:2px;height:44px;background:#c9bdf0;"></div>
<div style="position:absolute;left:823.0px;top:606px;width:2px;height:44px;background:#c9bdf0;"></div>
<div style="position:absolute;left:1129.5px;top:606px;width:2px;height:44px;background:#c9bdf0;"></div>
<div style="position:absolute;left:1279.0px;top:606px;width:2px;height:44px;background:#c9bdf0;"></div>
<div style="position:absolute;left:1600.0px;top:606px;width:2px;height:44px;background:#c9bdf0;"></div>
<div style="position:absolute;left:2056.5px;top:606px;width:2px;height:44px;background:#c9d3cf;"></div>
<div style="position:absolute;left:88.5px;top:606px;width:2px;height:44px;background:#d5d7dc;"></div>
<div style="position:absolute;left:89.5px;top:650px;width:63.5px;height:40px;background:#ece8fc;"></div>
<div style="position:absolute;left:153px;top:650px;width:1904.5px;height:40px;background:#fefbe8;"></div>
<div style="position:absolute;left:2057.5px;top:650px;width:692.5px;height:40px;background:#effcf6;"></div>
<div style="position:absolute;left:89.5px;top:650px;width:63.5px;height:40px;display:flex;align-items:center;justify-content:center;font-family:'Liberation Sans', sans-serif;font-size:20.3px;color:#4a2191;font-weight:bold;white-space:nowrap;overflow:hidden;padding-left:0px;box-sizing:border-box;-webkit-text-stroke:0.35px #4a2191;">1</div>
<div style="position:absolute;left:153px;top:650px;width:521.5px;height:40px;display:flex;align-items:center;justify-content:flex-start;font-family:'Liberation Sans', sans-serif;font-size:20.3px;color:#1b1034;font-weight:bold;white-space:nowrap;overflow:hidden;padding-left:5.5px;box-sizing:border-box;-webkit-text-stroke:0.35px #1b1034;">Alquiler / Hipoteca</div>
<div style="position:absolute;left:674.5px;top:650px;width:149.5px;height:40px;display:flex;align-items:center;justify-content:center;font-family:'Liberation Sans', sans-serif;font-size:20.3px;color:#5f6673;font-weight:normal;white-space:nowrap;overflow:hidden;padding-left:0px;box-sizing:border-box;">Vivienda</div>
<div style="position:absolute;left:824px;top:650px;width:306.5px;height:40px;display:flex;align-items:center;justify-content:center;font-family:'Liberation Sans', sans-serif;font-size:20.3px;color:#1b1034;font-weight:bold;white-space:nowrap;overflow:hidden;padding-left:0px;box-sizing:border-box;-webkit-text-stroke:0.35px #1b1034;">01/04/2026</div>
<div style="position:absolute;left:1130.5px;top:650px;width:149.5px;height:40px;display:flex;align-items:center;justify-content:center;font-family:'Liberation Sans', sans-serif;font-size:20.3px;color:#4a2191;font-weight:bold;white-space:nowrap;overflow:hidden;padding-left:0px;box-sizing:border-box;-webkit-text-stroke:0.35px #4a2191;">$600,00</div>
<div style="position:absolute;left:1601px;top:650px;width:456.5px;height:40px;display:flex;align-items:center;justify-content:center;font-family:'Liberation Sans', sans-serif;font-size:20.3px;color:#283d8c;font-weight:normal;white-space:nowrap;overflow:hidden;padding-left:0px;box-sizing:border-box;">Transferencia</div>
<div style="position:absolute;left:1280px;top:650px;width:321px;height:40px;display:flex;align-items:center;justify-content:center;font-family:'Liberation Sans', sans-serif;font-size:20.3px;color:#922424;font-weight:bold;white-space:nowrap;overflow:hidden;padding-left:0px;box-sizing:border-box;-webkit-text-stroke:0.35px #922424;"><span style="flex:none;display:inline-block;position:relative;top:-1.5px;width:21px;height:21px;border-radius:50%;background:radial-gradient(circle at 45% 25%,#f06a5e 0%,#d02a22 70%,#a01c16 100%);"></span><span style="margin-left:11.5px">Crítico</span></div>
<div style="position:absolute;left:2057.5px;top:650px;width:692.5px;height:40px;display:flex;align-items:center;justify-content:center;font-family:'Liberation Sans', sans-serif;font-size:20.3px;color:#2a6049;font-weight:bold;white-space:nowrap;overflow:hidden;padding-left:0px;box-sizing:border-box;-webkit-text-stroke:0.35px #2a6049;"><svg width="21" height="21" viewBox="0 0 21 21" style="flex:none;position:relative;top:-1.5px"><defs><linearGradient id="cg3" x1="0" y1="0" x2="0" y2="1"><stop offset="0" stop-color="#72d257"/><stop offset="1" stop-color="#3f9f2c"/></linearGradient></defs><rect x="0.4" y="0.4" width="20.2" height="20.2" rx="4.2" fill="url(#cg3)" stroke="#4a9a36" stroke-width="0.8"/><path d="M4.6 10.4l4.2 5.6 7.6-11.2" fill="none" stroke="#fff" stroke-width="2.1" stroke-linecap="round" stroke-linejoin="round"/></svg><span style="margin-left:11.5px">PAGADO</span></div>
<div style="position:absolute;left:89.5px;top:690px;width:63.5px;height:40px;background:#ece8fc;"></div>
<div style="position:absolute;left:153px;top:690px;width:1904.5px;height:40px;background:#fefbe8;"></div>
<div style="position:absolute;left:2057.5px;top:690px;width:692.5px;height:40px;background:#effcf6;"></div>
<div style="position:absolute;left:89.5px;top:690px;width:63.5px;height:40px;display:flex;align-items:center;justify-content:center;font-family:'Liberation Sans', sans-serif;font-size:20.3px;color:#4a2191;font-weight:bold;white-space:nowrap;overflow:hidden;padding-left:0px;box-sizing:border-box;-webkit-text-stroke:0.35px #4a2191;">2</div>
<div style="position:absolute;left:153px;top:690px;width:521.5px;height:40px;display:flex;align-items:center;justify-content:flex-start;font-family:'Liberation Sans', sans-serif;font-size:20.3px;color:#1b1034;font-weight:bold;white-space:nowrap;overflow:hidden;padding-left:5.5px;box-sizing:border-box;-webkit-text-stroke:0.35px #1b1034;">Factura electricidad</div>
<div style="position:absolute;left:674.5px;top:690px;width:149.5px;height:40px;display:flex;align-items:center;justify-content:center;font-family:'Liberation Sans', sans-serif;font-size:20.3px;color:#5f6673;font-weight:normal;white-space:nowrap;overflow:hidden;padding-left:0px;box-sizing:border-box;">Servicios</div>
<div style="position:absolute;left:824px;top:690px;width:306.5px;height:40px;display:flex;align-items:center;justify-content:center;font-family:'Liberation Sans', sans-serif;font-size:20.3px;color:#1b1034;font-weight:bold;white-space:nowrap;overflow:hidden;padding-left:0px;box-sizing:border-box;-webkit-text-stroke:0.35px #1b1034;">05/04/2026</div>
<div style="position:absolute;left:1130.5px;top:690px;width:149.5px;height:40px;display:flex;align-items:center;justify-content:center;font-family:'Liberation Sans', sans-serif;font-size:20.3px;color:#4a2191;font-weight:bold;white-space:nowrap;overflow:hidden;padding-left:0px;box-sizing:border-box;-webkit-text-stroke:0.35px #4a2191;">$95,00</div>
<div style="position:absolute;left:1601px;top:690px;width:456.5px;height:40px;display:flex;align-items:center;justify-content:center;font-family:'Liberation Sans', sans-serif;font-size:20.3px;color:#283d8c;font-weight:normal;white-space:nowrap;overflow:hidden;padding-left:0px;box-sizing:border-box;">Transferencia</div>
<div style="position:absolute;left:1280px;top:690px;width:321px;height:40px;display:flex;align-items:center;justify-content:center;font-family:'Liberation Sans', sans-serif;font-size:20.3px;color:#922424;font-weight:bold;white-space:nowrap;overflow:hidden;padding-left:0px;box-sizing:border-box;-webkit-text-stroke:0.35px #922424;"><span style="flex:none;display:inline-block;position:relative;top:-1.5px;width:21px;height:21px;border-radius:50%;background:radial-gradient(circle at 45% 25%,#f06a5e 0%,#d02a22 70%,#a01c16 100%);"></span><span style="margin-left:11.5px">Crítico</span></div>
<div style="position:absolute;left:2057.5px;top:690px;width:692.5px;height:40px;display:flex;align-items:center;justify-content:center;font-family:'Liberation Sans', sans-serif;font-size:20.3px;color:#2a6049;font-weight:bold;white-space:nowrap;overflow:hidden;padding-left:0px;box-sizing:border-box;-webkit-text-stroke:0.35px #2a6049;"><svg width="21" height="21" viewBox="0 0 21 21" style="flex:none;position:relative;top:-1.5px"><defs><linearGradient id="cg4" x1="0" y1="0" x2="0" y2="1"><stop offset="0" stop-color="#72d257"/><stop offset="1" stop-color="#3f9f2c"/></linearGradient></defs><rect x="0.4" y="0.4" width="20.2" height="20.2" rx="4.2" fill="url(#cg4)" stroke="#4a9a36" stroke-width="0.8"/><path d="M4.6 10.4l4.2 5.6 7.6-11.2" fill="none" stroke="#fff" stroke-width="2.1" stroke-linecap="round" stroke-linejoin="round"/></svg><span style="margin-left:11.5px">PAGADO</span></div>
<div style="position:absolute;left:89.5px;top:730px;width:63.5px;height:39px;background:#ece8fc;"></div>
<div style="position:absolute;left:153px;top:730px;width:1904.5px;height:39px;background:#fefbe8;"></div>
<div style="position:absolute;left:2057.5px;top:730px;width:692.5px;height:39px;background:#effcf6;"></div>
<div style="position:absolute;left:89.5px;top:730px;width:63.5px;height:39px;display:flex;align-items:center;justify-content:center;font-family:'Liberation Sans', sans-serif;font-size:20.3px;color:#4a2191;font-weight:bold;white-space:nowrap;overflow:hidden;padding-left:0px;box-sizing:border-box;-webkit-text-stroke:0.35px #4a2191;">3</div>
<div style="position:absolute;left:153px;top:730px;width:521.5px;height:39px;display:flex;align-items:center;justify-content:flex-start;font-family:'Liberation Sans', sans-serif;font-size:20.3px;color:#1b1034;font-weight:bold;white-space:nowrap;overflow:hidden;padding-left:5.5px;box-sizing:border-box;-webkit-text-stroke:0.35px #1b1034;">Internet / Cable & Wireless</div>
<div style="position:absolute;left:674.5px;top:730px;width:149.5px;height:39px;display:flex;align-items:center;justify-content:center;font-family:'Liberation Sans', sans-serif;font-size:20.3px;color:#5f6673;font-weight:normal;white-space:nowrap;overflow:hidden;padding-left:0px;box-sizing:border-box;">Servicios</div>
<div style="position:absolute;left:824px;top:730px;width:306.5px;height:39px;display:flex;align-items:center;justify-content:center;font-family:'Liberation Sans', sans-serif;font-size:20.3px;color:#1b1034;font-weight:bold;white-space:nowrap;overflow:hidden;padding-left:0px;box-sizing:border-box;-webkit-text-stroke:0.35px #1b1034;">05/04/2026</div>
<div style="position:absolute;left:1130.5px;top:730px;width:149.5px;height:39px;display:flex;align-items:center;justify-content:center;font-family:'Liberation Sans', sans-serif;font-size:20.3px;color:#4a2191;font-weight:bold;white-space:nowrap;overflow:hidden;padding-left:0px;box-sizing:border-box;-webkit-text-stroke:0.35px #4a2191;">$60,00</div>
<div style="position:absolute;left:1601px;top:730px;width:456.5px;height:39px;display:flex;align-items:center;justify-content:center;font-family:'Liberation Sans', sans-serif;font-size:20.3px;color:#283d8c;font-weight:normal;white-space:nowrap;overflow:hidden;padding-left:0px;box-sizing:border-box;">Transferencia</div>
<div style="position:absolute;left:1280px;top:730px;width:321px;height:39px;display:flex;align-items:center;justify-content:center;font-family:'Liberation Sans', sans-serif;font-size:20.3px;color:#922424;font-weight:bold;white-space:nowrap;overflow:hidden;padding-left:0px;box-sizing:border-box;-webkit-text-stroke:0.35px #922424;"><span style="flex:none;display:inline-block;position:relative;top:-1.5px;width:21px;height:21px;border-radius:50%;background:radial-gradient(circle at 45% 25%,#f06a5e 0%,#d02a22 70%,#a01c16 100%);"></span><span style="margin-left:11.5px">Crítico</span></div>
<div style="position:absolute;left:2057.5px;top:730px;width:692.5px;height:39px;display:flex;align-items:center;justify-content:center;font-family:'Liberation Sans', sans-serif;font-size:20.3px;color:#2a6049;font-weight:bold;white-space:nowrap;overflow:hidden;padding-left:0px;box-sizing:border-box;-webkit-text-stroke:0.35px #2a6049;"><svg width="21" height="21" viewBox="0 0 21 21" style="flex:none;position:relative;top:-1.5px"><defs><linearGradient id="cg5" x1="0" y1="0" x2="0" y2="1"><stop offset="0" stop-color="#72d257"/><stop offset="1" stop-color="#3f9f2c"/></linearGradient></defs><rect x="0.4" y="0.4" width="20.2" height="20.2" rx="4.2" fill="url(#cg5)" stroke="#4a9a36" stroke-width="0.8"/><path d="M4.6 10.4l4.2 5.6 7.6-11.2" fill="none" stroke="#fff" stroke-width="2.1" stroke-linecap="round" stroke-linejoin="round"/></svg><span style="margin-left:11.5px">PAGADO</span></div>
<div style="position:absolute;left:89.5px;top:769px;width:63.5px;height:40px;background:#ece8fc;"></div>
<div style="position:absolute;left:153px;top:769px;width:1904.5px;height:40px;background:#fefbe8;"></div>
<div style="position:absolute;left:2057.5px;top:769px;width:692.5px;height:40px;background:#effcf6;"></div>
<div style="position:absolute;left:89.5px;top:769px;width:63.5px;height:40px;display:flex;align-items:center;justify-content:center;font-family:'Liberation Sans', sans-serif;font-size:20.3px;color:#4a2191;font-weight:bold;white-space:nowrap;overflow:hidden;padding-left:0px;box-sizing:border-box;-webkit-text-stroke:0.35px #4a2191;">4</div>
<div style="position:absolute;left:153px;top:769px;width:521.5px;height:40px;display:flex;align-items:center;justify-content:flex-start;font-family:'Liberation Sans', sans-serif;font-size:20.3px;color:#1b1034;font-weight:bold;white-space:nowrap;overflow:hidden;padding-left:5.5px;box-sizing:border-box;-webkit-text-stroke:0.35px #1b1034;">Netflix</div>
<div style="position:absolute;left:674.5px;top:769px;width:149.5px;height:40px;display:flex;align-items:center;justify-content:center;font-family:'Liberation Sans', sans-serif;font-size:20.3px;color:#5f6673;font-weight:normal;white-space:nowrap;overflow:hidden;padding-left:0px;box-sizing:border-box;">Suscripción</div>
<div style="position:absolute;left:824px;top:769px;width:306.5px;height:40px;display:flex;align-items:center;justify-content:center;font-family:'Liberation Sans', sans-serif;font-size:20.3px;color:#1b1034;font-weight:bold;white-space:nowrap;overflow:hidden;padding-left:0px;box-sizing:border-box;-webkit-text-stroke:0.35px #1b1034;">06/04/2026</div>
<div style="position:absolute;left:1130.5px;top:769px;width:149.5px;height:40px;display:flex;align-items:center;justify-content:center;font-family:'Liberation Sans', sans-serif;font-size:20.3px;color:#4a2191;font-weight:bold;white-space:nowrap;overflow:hidden;padding-left:0px;box-sizing:border-box;-webkit-text-stroke:0.35px #4a2191;">$8,99</div>
<div style="position:absolute;left:1601px;top:769px;width:456.5px;height:40px;display:flex;align-items:center;justify-content:center;font-family:'Liberation Sans', sans-serif;font-size:20.3px;color:#283d8c;font-weight:normal;white-space:nowrap;overflow:hidden;padding-left:0px;box-sizing:border-box;">Tarjeta</div>
<div style="position:absolute;left:1280px;top:769px;width:321px;height:40px;display:flex;align-items:center;justify-content:center;font-family:'Liberation Sans', sans-serif;font-size:20.3px;color:#2a6049;font-weight:bold;white-space:nowrap;overflow:hidden;padding-left:0px;box-sizing:border-box;-webkit-text-stroke:0.35px #2a6049;"><span style="flex:none;display:inline-block;position:relative;top:-1.5px;width:21px;height:21px;border-radius:50%;background:radial-gradient(circle at 45% 25%,#9be870 0%,#45b02a 70%,#2a8a1a 100%);"></span><span style="margin-left:11.5px">Baja</span></div>
<div style="position:absolute;left:2057.5px;top:769px;width:692.5px;height:40px;display:flex;align-items:center;justify-content:center;font-family:'Liberation Sans', sans-serif;font-size:20.3px;color:#2a6049;font-weight:bold;white-space:nowrap;overflow:hidden;padding-left:0px;box-sizing:border-box;-webkit-text-stroke:0.35px #2a6049;"><svg width="21" height="21" viewBox="0 0 21 21" style="flex:none;position:relative;top:-1.5px"><defs><linearGradient id="cg6" x1="0" y1="0" x2="0" y2="1"><stop offset="0" stop-color="#72d257"/><stop offset="1" stop-color="#3f9f2c"/></linearGradient></defs><rect x="0.4" y="0.4" width="20.2" height="20.2" rx="4.2" fill="url(#cg6)" stroke="#4a9a36" stroke-width="0.8"/><path d="M4.6 10.4l4.2 5.6 7.6-11.2" fill="none" stroke="#fff" stroke-width="2.1" stroke-linecap="round" stroke-linejoin="round"/></svg><span style="margin-left:11.5px">PAGADO</span></div>
<div style="position:absolute;left:89.5px;top:809px;width:63.5px;height:39px;background:#ece8fc;"></div>
<div style="position:absolute;left:153px;top:809px;width:1904.5px;height:39px;background:#fefbe8;"></div>
<div style="position:absolute;left:2057.5px;top:809px;width:692.5px;height:39px;background:#effcf6;"></div>
<div style="position:absolute;left:89.5px;top:809px;width:63.5px;height:39px;display:flex;align-items:center;justify-content:center;font-family:'Liberation Sans', sans-serif;font-size:20.3px;color:#4a2191;font-weight:bold;white-space:nowrap;overflow:hidden;padding-left:0px;box-sizing:border-box;-webkit-text-stroke:0.35px #4a2191;">5</div>
<div style="position:absolute;left:153px;top:809px;width:521.5px;height:39px;display:flex;align-items:center;justify-content:flex-start;font-family:'Liberation Sans', sans-serif;font-size:20.3px;color:#1b1034;font-weight:bold;white-space:nowrap;overflow:hidden;padding-left:5.5px;box-sizing:border-box;-webkit-text-stroke:0.35px #1b1034;">Spotify</div>
<div style="position:absolute;left:674.5px;top:809px;width:149.5px;height:39px;display:flex;align-items:center;justify-content:center;font-family:'Liberation Sans', sans-serif;font-size:20.3px;color:#5f6673;font-weight:normal;white-space:nowrap;overflow:hidden;padding-left:0px;box-sizing:border-box;">Suscripción</div>
<div style="position:absolute;left:824px;top:809px;width:306.5px;height:39px;display:flex;align-items:center;justify-content:center;font-family:'Liberation Sans', sans-serif;font-size:20.3px;color:#1b1034;font-weight:bold;white-space:nowrap;overflow:hidden;padding-left:0px;box-sizing:border-box;-webkit-text-stroke:0.35px #1b1034;">08/04/2026</div>
<div style="position:absolute;left:1130.5px;top:809px;width:149.5px;height:39px;display:flex;align-items:center;justify-content:center;font-family:'Liberation Sans', sans-serif;font-size:20.3px;color:#4a2191;font-weight:bold;white-space:nowrap;overflow:hidden;padding-left:0px;box-sizing:border-box;-webkit-text-stroke:0.35px #4a2191;">$6,99</div>
<div style="position:absolute;left:1601px;top:809px;width:456.5px;height:39px;display:flex;align-items:center;justify-content:center;font-family:'Liberation Sans', sans-serif;font-size:20.3px;color:#283d8c;font-weight:normal;white-space:nowrap;overflow:hidden;padding-left:0px;box-sizing:border-box;">Tarjeta</div>
<div style="position:absolute;left:1280px;top:809px;width:321px;height:39px;display:flex;align-items:center;justify-content:center;font-family:'Liberation Sans', sans-serif;font-size:20.3px;color:#2a6049;font-weight:bold;white-space:nowrap;overflow:hidden;padding-left:0px;box-sizing:border-box;-webkit-text-stroke:0.35px #2a6049;"><span style="flex:none;display:inline-block;position:relative;top:-1.5px;width:21px;height:21px;border-radius:50%;background:radial-gradient(circle at 45% 25%,#9be870 0%,#45b02a 70%,#2a8a1a 100%);"></span><span style="margin-left:11.5px">Baja</span></div>
<div style="position:absolute;left:2057.5px;top:809px;width:692.5px;height:39px;display:flex;align-items:center;justify-content:center;font-family:'Liberation Sans', sans-serif;font-size:20.3px;color:#2a6049;font-weight:bold;white-space:nowrap;overflow:hidden;padding-left:0px;box-sizing:border-box;-webkit-text-stroke:0.35px #2a6049;"><svg width="21" height="21" viewBox="0 0 21 21" style="flex:none;position:relative;top:-1.5px"><defs><linearGradient id="cg7" x1="0" y1="0" x2="0" y2="1"><stop offset="0" stop-color="#72d257"/><stop offset="1" stop-color="#3f9f2c"/></linearGradient></defs><rect x="0.4" y="0.4" width="20.2" height="20.2" rx="4.2" fill="url(#cg7)" stroke="#4a9a36" stroke-width="0.8"/><path d="M4.6 10.4l4.2 5.6 7.6-11.2" fill="none" stroke="#fff" stroke-width="2.1" stroke-linecap="round" stroke-linejoin="round"/></svg><span style="margin-left:11.5px">PAGADO</span></div>
<div style="position:absolute;left:89.5px;top:848px;width:63.5px;height:40px;background:#ece8fc;"></div>
<div style="position:absolute;left:153px;top:848px;width:1904.5px;height:40px;background:#fefbe8;"></div>
<div style="position:absolute;left:2057.5px;top:848px;width:692.5px;height:40px;background:#effcf6;"></div>
<div style="position:absolute;left:89.5px;top:848px;width:63.5px;height:40px;display:flex;align-items:center;justify-content:center;font-family:'Liberation Sans', sans-serif;font-size:20.3px;color:#4a2191;font-weight:bold;white-space:nowrap;overflow:hidden;padding-left:0px;box-sizing:border-box;-webkit-text-stroke:0.35px #4a2191;">6</div>
<div style="position:absolute;left:153px;top:848px;width:521.5px;height:40px;display:flex;align-items:center;justify-content:flex-start;font-family:'Liberation Sans', sans-serif;font-size:20.3px;color:#1b1034;font-weight:bold;white-space:nowrap;overflow:hidden;padding-left:5.5px;box-sizing:border-box;-webkit-text-stroke:0.35px #1b1034;">Factura agua</div>
<div style="position:absolute;left:674.5px;top:848px;width:149.5px;height:40px;display:flex;align-items:center;justify-content:center;font-family:'Liberation Sans', sans-serif;font-size:20.3px;color:#5f6673;font-weight:normal;white-space:nowrap;overflow:hidden;padding-left:0px;box-sizing:border-box;">Servicios</div>
<div style="position:absolute;left:824px;top:848px;width:306.5px;height:40px;display:flex;align-items:center;justify-content:center;font-family:'Liberation Sans', sans-serif;font-size:20.3px;color:#1b1034;font-weight:bold;white-space:nowrap;overflow:hidden;padding-left:0px;box-sizing:border-box;-webkit-text-stroke:0.35px #1b1034;">10/04/2026</div>
<div style="position:absolute;left:1130.5px;top:848px;width:149.5px;height:40px;display:flex;align-items:center;justify-content:center;font-family:'Liberation Sans', sans-serif;font-size:20.3px;color:#4a2191;font-weight:bold;white-space:nowrap;overflow:hidden;padding-left:0px;box-sizing:border-box;-webkit-text-stroke:0.35px #4a2191;">$22,00</div>
<div style="position:absolute;left:1601px;top:848px;width:456.5px;height:40px;display:flex;align-items:center;justify-content:center;font-family:'Liberation Sans', sans-serif;font-size:20.3px;color:#283d8c;font-weight:normal;white-space:nowrap;overflow:hidden;padding-left:0px;box-sizing:border-box;">Transferencia</div>
<div style="position:absolute;left:1280px;top:848px;width:321px;height:40px;display:flex;align-items:center;justify-content:center;font-family:'Liberation Sans', sans-serif;font-size:20.3px;color:#922424;font-weight:bold;white-space:nowrap;overflow:hidden;padding-left:0px;box-sizing:border-box;-webkit-text-stroke:0.35px #922424;"><span style="flex:none;display:inline-block;position:relative;top:-1.5px;width:21px;height:21px;border-radius:50%;background:radial-gradient(circle at 45% 25%,#f06a5e 0%,#d02a22 70%,#a01c16 100%);"></span><span style="margin-left:11.5px">Crítico</span></div>
<div style="position:absolute;left:2057.5px;top:848px;width:692.5px;height:40px;display:flex;align-items:center;justify-content:center;font-family:'Liberation Sans', sans-serif;font-size:20.3px;color:#2a6049;font-weight:bold;white-space:nowrap;overflow:hidden;padding-left:0px;box-sizing:border-box;-webkit-text-stroke:0.35px #2a6049;"><svg width="21" height="21" viewBox="0 0 21 21" style="flex:none;position:relative;top:-1.5px"><defs><linearGradient id="cg8" x1="0" y1="0" x2="0" y2="1"><stop offset="0" stop-color="#72d257"/><stop offset="1" stop-color="#3f9f2c"/></linearGradient></defs><rect x="0.4" y="0.4" width="20.2" height="20.2" rx="4.2" fill="url(#cg8)" stroke="#4a9a36" stroke-width="0.8"/><path d="M4.6 10.4l4.2 5.6 7.6-11.2" fill="none" stroke="#fff" stroke-width="2.1" stroke-linecap="round" stroke-linejoin="round"/></svg><span style="margin-left:11.5px">PAGADO</span></div>
<div style="position:absolute;left:89.5px;top:888px;width:63.5px;height:40px;background:#ece8fc;"></div>
<div style="position:absolute;left:153px;top:888px;width:1904.5px;height:40px;background:#fefbe8;"></div>
<div style="position:absolute;left:2057.5px;top:888px;width:692.5px;height:40px;background:#effcf6;"></div>
<div style="position:absolute;left:89.5px;top:888px;width:63.5px;height:40px;display:flex;align-items:center;justify-content:center;font-family:'Liberation Sans', sans-serif;font-size:20.3px;color:#4a2191;font-weight:bold;white-space:nowrap;overflow:hidden;padding-left:0px;box-sizing:border-box;-webkit-text-stroke:0.35px #4a2191;">7</div>
<div style="position:absolute;left:153px;top:888px;width:521.5px;height:40px;display:flex;align-items:center;justify-content:flex-start;font-family:'Liberation Sans', sans-serif;font-size:20.3px;color:#1b1034;font-weight:bold;white-space:nowrap;overflow:hidden;padding-left:5.5px;box-sizing:border-box;-webkit-text-stroke:0.35px #1b1034;">Cuota préstamo personal</div>
<div style="position:absolute;left:674.5px;top:888px;width:149.5px;height:40px;display:flex;align-items:center;justify-content:center;font-family:'Liberation Sans', sans-serif;font-size:20.3px;color:#5f6673;font-weight:normal;white-space:nowrap;overflow:hidden;padding-left:0px;box-sizing:border-box;">Deuda</div>
<div style="position:absolute;left:824px;top:888px;width:306.5px;height:40px;display:flex;align-items:center;justify-content:center;font-family:'Liberation Sans', sans-serif;font-size:20.3px;color:#1b1034;font-weight:bold;white-space:nowrap;overflow:hidden;padding-left:0px;box-sizing:border-box;-webkit-text-stroke:0.35px #1b1034;">15/04/2026</div>
<div style="position:absolute;left:1130.5px;top:888px;width:149.5px;height:40px;display:flex;align-items:center;justify-content:center;font-family:'Liberation Sans', sans-serif;font-size:20.3px;color:#4a2191;font-weight:bold;white-space:nowrap;overflow:hidden;padding-left:0px;box-sizing:border-box;-webkit-text-stroke:0.35px #4a2191;">$180,00</div>
<div style="position:absolute;left:1601px;top:888px;width:456.5px;height:40px;display:flex;align-items:center;justify-content:center;font-family:'Liberation Sans', sans-serif;font-size:20.3px;color:#283d8c;font-weight:normal;white-space:nowrap;overflow:hidden;padding-left:0px;box-sizing:border-box;">Transferencia</div>
<div style="position:absolute;left:1280px;top:888px;width:321px;height:40px;display:flex;align-items:center;justify-content:center;font-family:'Liberation Sans', sans-serif;font-size:20.3px;color:#922424;font-weight:bold;white-space:nowrap;overflow:hidden;padding-left:0px;box-sizing:border-box;-webkit-text-stroke:0.35px #922424;"><span style="flex:none;display:inline-block;position:relative;top:-1.5px;width:21px;height:21px;border-radius:50%;background:radial-gradient(circle at 45% 25%,#f06a5e 0%,#d02a22 70%,#a01c16 100%);"></span><span style="margin-left:11.5px">Crítico</span></div>
<div style="position:absolute;left:2057.5px;top:888px;width:692.5px;height:40px;display:flex;align-items:center;justify-content:center;font-family:'Liberation Sans', sans-serif;font-size:20.3px;color:#2a6049;font-weight:bold;white-space:nowrap;overflow:hidden;padding-left:0px;box-sizing:border-box;-webkit-text-stroke:0.35px #2a6049;"><svg width="21" height="21" viewBox="0 0 21 21" style="flex:none;position:relative;top:-1.5px"><defs><linearGradient id="cg9" x1="0" y1="0" x2="0" y2="1"><stop offset="0" stop-color="#72d257"/><stop offset="1" stop-color="#3f9f2c"/></linearGradient></defs><rect x="0.4" y="0.4" width="20.2" height="20.2" rx="4.2" fill="url(#cg9)" stroke="#4a9a36" stroke-width="0.8"/><path d="M4.6 10.4l4.2 5.6 7.6-11.2" fill="none" stroke="#fff" stroke-width="2.1" stroke-linecap="round" stroke-linejoin="round"/></svg><span style="margin-left:11.5px">PAGADO</span></div>
<div style="position:absolute;left:89.5px;top:928px;width:63.5px;height:39px;background:#ece8fc;"></div>
<div style="position:absolute;left:153px;top:928px;width:1904.5px;height:39px;background:#fefbe8;"></div>
<div style="position:absolute;left:2057.5px;top:928px;width:692.5px;height:39px;background:#fefbe8;"></div>
<div style="position:absolute;left:89.5px;top:928px;width:63.5px;height:39px;display:flex;align-items:center;justify-content:center;font-family:'Liberation Sans', sans-serif;font-size:20.3px;color:#4a2191;font-weight:bold;white-space:nowrap;overflow:hidden;padding-left:0px;box-sizing:border-box;-webkit-text-stroke:0.35px #4a2191;">8</div>
<div style="position:absolute;left:153px;top:928px;width:521.5px;height:39px;display:flex;align-items:center;justify-content:flex-start;font-family:'Liberation Sans', sans-serif;font-size:20.3px;color:#1b1034;font-weight:bold;white-space:nowrap;overflow:hidden;padding-left:5.5px;box-sizing:border-box;-webkit-text-stroke:0.35px #1b1034;">Pago tarjeta de crédito</div>
<div style="position:absolute;left:674.5px;top:928px;width:149.5px;height:39px;display:flex;align-items:center;justify-content:center;font-family:'Liberation Sans', sans-serif;font-size:20.3px;color:#5f6673;font-weight:normal;white-space:nowrap;overflow:hidden;padding-left:0px;box-sizing:border-box;">Deuda</div>
<div style="position:absolute;left:824px;top:928px;width:306.5px;height:39px;display:flex;align-items:center;justify-content:center;font-family:'Liberation Sans', sans-serif;font-size:20.3px;color:#1b1034;font-weight:bold;white-space:nowrap;overflow:hidden;padding-left:0px;box-sizing:border-box;-webkit-text-stroke:0.35px #1b1034;">20/04/2026</div>
<div style="position:absolute;left:1130.5px;top:928px;width:149.5px;height:39px;display:flex;align-items:center;justify-content:center;font-family:'Liberation Sans', sans-serif;font-size:20.3px;color:#4a2191;font-weight:bold;white-space:nowrap;overflow:hidden;padding-left:0px;box-sizing:border-box;-webkit-text-stroke:0.35px #4a2191;">$150,00</div>
<div style="position:absolute;left:1601px;top:928px;width:456.5px;height:39px;display:flex;align-items:center;justify-content:center;font-family:'Liberation Sans', sans-serif;font-size:20.3px;color:#283d8c;font-weight:normal;white-space:nowrap;overflow:hidden;padding-left:0px;box-sizing:border-box;">Transferencia</div>
<div style="position:absolute;left:1280px;top:928px;width:321px;height:39px;display:flex;align-items:center;justify-content:center;font-family:'Liberation Sans', sans-serif;font-size:20.3px;color:#922424;font-weight:bold;white-space:nowrap;overflow:hidden;padding-left:0px;box-sizing:border-box;-webkit-text-stroke:0.35px #922424;"><span style="flex:none;display:inline-block;position:relative;top:-1.5px;width:21px;height:21px;border-radius:50%;background:radial-gradient(circle at 45% 25%,#f06a5e 0%,#d02a22 70%,#a01c16 100%);"></span><span style="margin-left:11.5px">Crítico</span></div>
<div style="position:absolute;left:2057.5px;top:928px;width:692.5px;height:39px;display:flex;align-items:center;justify-content:center;font-family:'Liberation Sans', sans-serif;font-size:20.3px;color:#8a4b14;font-weight:bold;white-space:nowrap;overflow:hidden;padding-left:0px;box-sizing:border-box;-webkit-text-stroke:0.35px #8a4b14;"><svg width="14.00" height="20" viewBox="0 0 14 20" style="flex:none;position:relative;top:-1.6px"><defs><linearGradient id="hg10" x1="0" x2="1"><stop offset="0" stop-color="#b8734a"/><stop offset="0.55" stop-color="#6a3416"/><stop offset="1" stop-color="#1e0600"/></linearGradient></defs><path d="M1.4 2.6H12.6C12.8 6.6 11.4 8.2 7.7 10H6.3C2.6 8.2 1.2 6.6 1.4 2.6z" fill="#e6e4e0"/><path d="M2.1 5H11.9C11.6 7 10.6 8.2 7.5 9.7H6.5C3.4 8.2 2.4 7 2.1 5z" fill="#9c7d5c"/><path d="M6.3 10H7.7C11.4 11.8 12.8 13.4 12.6 17.4H1.4C1.2 13.4 2.6 11.8 6.3 10z" fill="#eceaf3"/><path d="M7 13.2C8.8 14.6 11 15.8 11.8 17.4H2.2C3 15.8 5.2 14.6 7 13.2z" fill="#a47a44"/><rect x="0.3" y="0.2" width="13.4" height="2.6" rx="1.2" fill="url(#hg10)"/><rect x="0.3" y="17.2" width="13.4" height="2.6" rx="1.2" fill="url(#hg10)"/></svg><span style="margin-left:14.4px">PENDIENTE</span></div>
<div style="position:absolute;left:89.5px;top:967px;width:63.5px;height:40px;background:#ece8fc;"></div>
<div style="position:absolute;left:153px;top:967px;width:1904.5px;height:40px;background:#fefbe8;"></div>
<div style="position:absolute;left:2057.5px;top:967px;width:692.5px;height:40px;background:#fefbe8;"></div>
<div style="position:absolute;left:89.5px;top:967px;width:63.5px;height:40px;display:flex;align-items:center;justify-content:center;font-family:'Liberation Sans', sans-serif;font-size:20.3px;color:#4a2191;font-weight:bold;white-space:nowrap;overflow:hidden;padding-left:0px;box-sizing:border-box;-webkit-text-stroke:0.35px #4a2191;">9</div>
<div style="position:absolute;left:153px;top:967px;width:521.5px;height:40px;display:flex;align-items:center;justify-content:flex-start;font-family:'Liberation Sans', sans-serif;font-size:20.3px;color:#1b1034;font-weight:bold;white-space:nowrap;overflow:hidden;padding-left:5.5px;box-sizing:border-box;-webkit-text-stroke:0.35px #1b1034;">Seguro de salud</div>
<div style="position:absolute;left:674.5px;top:967px;width:149.5px;height:40px;display:flex;align-items:center;justify-content:center;font-family:'Liberation Sans', sans-serif;font-size:20.3px;color:#5f6673;font-weight:normal;white-space:nowrap;overflow:hidden;padding-left:0px;box-sizing:border-box;">Seguro</div>
<div style="position:absolute;left:824px;top:967px;width:306.5px;height:40px;display:flex;align-items:center;justify-content:center;font-family:'Liberation Sans', sans-serif;font-size:20.3px;color:#1b1034;font-weight:bold;white-space:nowrap;overflow:hidden;padding-left:0px;box-sizing:border-box;-webkit-text-stroke:0.35px #1b1034;">20/04/2026</div>
<div style="position:absolute;left:1130.5px;top:967px;width:149.5px;height:40px;display:flex;align-items:center;justify-content:center;font-family:'Liberation Sans', sans-serif;font-size:20.3px;color:#4a2191;font-weight:bold;white-space:nowrap;overflow:hidden;padding-left:0px;box-sizing:border-box;-webkit-text-stroke:0.35px #4a2191;">$80,00</div>
<div style="position:absolute;left:1601px;top:967px;width:456.5px;height:40px;display:flex;align-items:center;justify-content:center;font-family:'Liberation Sans', sans-serif;font-size:20.3px;color:#283d8c;font-weight:normal;white-space:nowrap;overflow:hidden;padding-left:0px;box-sizing:border-box;">Transferencia</div>
<div style="position:absolute;left:1280px;top:967px;width:321px;height:40px;display:flex;align-items:center;justify-content:center;font-family:'Liberation Sans', sans-serif;font-size:20.3px;color:#8a4b14;font-weight:bold;white-space:nowrap;overflow:hidden;padding-left:0px;box-sizing:border-box;-webkit-text-stroke:0.35px #8a4b14;"><span style="flex:none;display:inline-block;position:relative;top:-1.5px;width:21px;height:21px;border-radius:50%;box-shadow:inset 0 0 0 1px #e3ae30;background:radial-gradient(circle at 45% 25%,#fff0a0 0%,#f8d848 70%,#e3ae30 100%);"></span><span style="margin-left:11.5px">Media</span></div>
<div style="position:absolute;left:2057.5px;top:967px;width:692.5px;height:40px;display:flex;align-items:center;justify-content:center;font-family:'Liberation Sans', sans-serif;font-size:20.3px;color:#8a4b14;font-weight:bold;white-space:nowrap;overflow:hidden;padding-left:0px;box-sizing:border-box;-webkit-text-stroke:0.35px #8a4b14;"><svg width="14.00" height="20" viewBox="0 0 14 20" style="flex:none;position:relative;top:-1.6px"><defs><linearGradient id="hg11" x1="0" x2="1"><stop offset="0" stop-color="#b8734a"/><stop offset="0.55" stop-color="#6a3416"/><stop offset="1" stop-color="#1e0600"/></linearGradient></defs><path d="M1.4 2.6H12.6C12.8 6.6 11.4 8.2 7.7 10H6.3C2.6 8.2 1.2 6.6 1.4 2.6z" fill="#e6e4e0"/><path d="M2.1 5H11.9C11.6 7 10.6 8.2 7.5 9.7H6.5C3.4 8.2 2.4 7 2.1 5z" fill="#9c7d5c"/><path d="M6.3 10H7.7C11.4 11.8 12.8 13.4 12.6 17.4H1.4C1.2 13.4 2.6 11.8 6.3 10z" fill="#eceaf3"/><path d="M7 13.2C8.8 14.6 11 15.8 11.8 17.4H2.2C3 15.8 5.2 14.6 7 13.2z" fill="#a47a44"/><rect x="0.3" y="0.2" width="13.4" height="2.6" rx="1.2" fill="url(#hg11)"/><rect x="0.3" y="17.2" width="13.4" height="2.6" rx="1.2" fill="url(#hg11)"/></svg><span style="margin-left:14.4px">PENDIENTE</span></div>
<div style="position:absolute;left:89.5px;top:1007px;width:63.5px;height:40px;background:#ece8fc;"></div>
<div style="position:absolute;left:153px;top:1007px;width:1904.5px;height:40px;background:#fefbe8;"></div>
<div style="position:absolute;left:2057.5px;top:1007px;width:692.5px;height:40px;background:#fefbe8;"></div>
<div style="position:absolute;left:89.5px;top:1007px;width:63.5px;height:40px;display:flex;align-items:center;justify-content:center;font-family:'Liberation Sans', sans-serif;font-size:20.3px;color:#4a2191;font-weight:bold;white-space:nowrap;overflow:hidden;padding-left:0px;box-sizing:border-box;-webkit-text-stroke:0.35px #4a2191;">10</div>
<div style="position:absolute;left:153px;top:1007px;width:521.5px;height:40px;display:flex;align-items:center;justify-content:flex-start;font-family:'Liberation Sans', sans-serif;font-size:20.3px;color:#1b1034;font-weight:bold;white-space:nowrap;overflow:hidden;padding-left:5.5px;box-sizing:border-box;-webkit-text-stroke:0.35px #1b1034;">Teléfono celular</div>
<div style="position:absolute;left:674.5px;top:1007px;width:149.5px;height:40px;display:flex;align-items:center;justify-content:center;font-family:'Liberation Sans', sans-serif;font-size:20.3px;color:#5f6673;font-weight:normal;white-space:nowrap;overflow:hidden;padding-left:0px;box-sizing:border-box;">Servicios</div>
<div style="position:absolute;left:824px;top:1007px;width:306.5px;height:40px;display:flex;align-items:center;justify-content:center;font-family:'Liberation Sans', sans-serif;font-size:20.3px;color:#1b1034;font-weight:bold;white-space:nowrap;overflow:hidden;padding-left:0px;box-sizing:border-box;-webkit-text-stroke:0.35px #1b1034;">22/04/2026</div>
<div style="position:absolute;left:1130.5px;top:1007px;width:149.5px;height:40px;display:flex;align-items:center;justify-content:center;font-family:'Liberation Sans', sans-serif;font-size:20.3px;color:#4a2191;font-weight:bold;white-space:nowrap;overflow:hidden;padding-left:0px;box-sizing:border-box;-webkit-text-stroke:0.35px #4a2191;">$35,00</div>
<div style="position:absolute;left:1601px;top:1007px;width:456.5px;height:40px;display:flex;align-items:center;justify-content:center;font-family:'Liberation Sans', sans-serif;font-size:20.3px;color:#283d8c;font-weight:normal;white-space:nowrap;overflow:hidden;padding-left:0px;box-sizing:border-box;">App</div>
<div style="position:absolute;left:1280px;top:1007px;width:321px;height:40px;display:flex;align-items:center;justify-content:center;font-family:'Liberation Sans', sans-serif;font-size:20.3px;color:#8a4b14;font-weight:bold;white-space:nowrap;overflow:hidden;padding-left:0px;box-sizing:border-box;-webkit-text-stroke:0.35px #8a4b14;"><span style="flex:none;display:inline-block;position:relative;top:-1.5px;width:21px;height:21px;border-radius:50%;box-shadow:inset 0 0 0 1px #e3ae30;background:radial-gradient(circle at 45% 25%,#fff0a0 0%,#f8d848 70%,#e3ae30 100%);"></span><span style="margin-left:11.5px">Media</span></div>
<div style="position:absolute;left:2057.5px;top:1007px;width:692.5px;height:40px;display:flex;align-items:center;justify-content:center;font-family:'Liberation Sans', sans-serif;font-size:20.3px;color:#8a4b14;font-weight:bold;white-space:nowrap;overflow:hidden;padding-left:0px;box-sizing:border-box;-webkit-text-stroke:0.35px #8a4b14;"><svg width="14.00" height="20" viewBox="0 0 14 20" style="flex:none;position:relative;top:-1.6px"><defs><linearGradient id="hg12" x1="0" x2="1"><stop offset="0" stop-color="#b8734a"/><stop offset="0.55" stop-color="#6a3416"/><stop offset="1" stop-color="#1e0600"/></linearGradient></defs><path d="M1.4 2.6H12.6C12.8 6.6 11.4 8.2 7.7 10H6.3C2.6 8.2 1.2 6.6 1.4 2.6z" fill="#e6e4e0"/><path d="M2.1 5H11.9C11.6 7 10.6 8.2 7.5 9.7H6.5C3.4 8.2 2.4 7 2.1 5z" fill="#9c7d5c"/><path d="M6.3 10H7.7C11.4 11.8 12.8 13.4 12.6 17.4H1.4C1.2 13.4 2.6 11.8 6.3 10z" fill="#eceaf3"/><path d="M7 13.2C8.8 14.6 11 15.8 11.8 17.4H2.2C3 15.8 5.2 14.6 7 13.2z" fill="#a47a44"/><rect x="0.3" y="0.2" width="13.4" height="2.6" rx="1.2" fill="url(#hg12)"/><rect x="0.3" y="17.2" width="13.4" height="2.6" rx="1.2" fill="url(#hg12)"/></svg><span style="margin-left:14.4px">PENDIENTE</span></div>
<div style="position:absolute;left:89.5px;top:1047px;width:63.5px;height:39px;background:#ece8fc;"></div>
<div style="position:absolute;left:153px;top:1047px;width:1904.5px;height:39px;background:#fefbe8;"></div>
<div style="position:absolute;left:2057.5px;top:1047px;width:692.5px;height:39px;background:#fefbe8;"></div>
<div style="position:absolute;left:89.5px;top:1047px;width:63.5px;height:39px;display:flex;align-items:center;justify-content:center;font-family:'Liberation Sans', sans-serif;font-size:20.3px;color:#4a2191;font-weight:bold;white-space:nowrap;overflow:hidden;padding-left:0px;box-sizing:border-box;-webkit-text-stroke:0.35px #4a2191;">11</div>
<div style="position:absolute;left:153px;top:1047px;width:521.5px;height:39px;display:flex;align-items:center;justify-content:flex-start;font-family:'Liberation Sans', sans-serif;font-size:20.3px;color:#1b1034;font-weight:bold;white-space:nowrap;overflow:hidden;padding-left:5.5px;box-sizing:border-box;-webkit-text-stroke:0.35px #1b1034;">Cuota vehículo</div>
<div style="position:absolute;left:674.5px;top:1047px;width:149.5px;height:39px;display:flex;align-items:center;justify-content:center;font-family:'Liberation Sans', sans-serif;font-size:20.3px;color:#5f6673;font-weight:normal;white-space:nowrap;overflow:hidden;padding-left:0px;box-sizing:border-box;">Deuda</div>
<div style="position:absolute;left:824px;top:1047px;width:306.5px;height:39px;display:flex;align-items:center;justify-content:center;font-family:'Liberation Sans', sans-serif;font-size:20.3px;color:#1b1034;font-weight:bold;white-space:nowrap;overflow:hidden;padding-left:0px;box-sizing:border-box;-webkit-text-stroke:0.35px #1b1034;">25/04/2026</div>
<div style="position:absolute;left:1130.5px;top:1047px;width:149.5px;height:39px;display:flex;align-items:center;justify-content:center;font-family:'Liberation Sans', sans-serif;font-size:20.3px;color:#4a2191;font-weight:bold;white-space:nowrap;overflow:hidden;padding-left:0px;box-sizing:border-box;-webkit-text-stroke:0.35px #4a2191;">$220,00</div>
<div style="position:absolute;left:1601px;top:1047px;width:456.5px;height:39px;display:flex;align-items:center;justify-content:center;font-family:'Liberation Sans', sans-serif;font-size:20.3px;color:#283d8c;font-weight:normal;white-space:nowrap;overflow:hidden;padding-left:0px;box-sizing:border-box;">Transferencia</div>
<div style="position:absolute;left:1280px;top:1047px;width:321px;height:39px;display:flex;align-items:center;justify-content:center;font-family:'Liberation Sans', sans-serif;font-size:20.3px;color:#922424;font-weight:bold;white-space:nowrap;overflow:hidden;padding-left:0px;box-sizing:border-box;-webkit-text-stroke:0.35px #922424;"><span style="flex:none;display:inline-block;position:relative;top:-1.5px;width:21px;height:21px;border-radius:50%;background:radial-gradient(circle at 45% 25%,#f06a5e 0%,#d02a22 70%,#a01c16 100%);"></span><span style="margin-left:11.5px">Crítico</span></div>
<div style="position:absolute;left:2057.5px;top:1047px;width:692.5px;height:39px;display:flex;align-items:center;justify-content:center;font-family:'Liberation Sans', sans-serif;font-size:20.3px;color:#8a4b14;font-weight:bold;white-space:nowrap;overflow:hidden;padding-left:0px;box-sizing:border-box;-webkit-text-stroke:0.35px #8a4b14;"><svg width="14.00" height="20" viewBox="0 0 14 20" style="flex:none;position:relative;top:-1.6px"><defs><linearGradient id="hg13" x1="0" x2="1"><stop offset="0" stop-color="#b8734a"/><stop offset="0.55" stop-color="#6a3416"/><stop offset="1" stop-color="#1e0600"/></linearGradient></defs><path d="M1.4 2.6H12.6C12.8 6.6 11.4 8.2 7.7 10H6.3C2.6 8.2 1.2 6.6 1.4 2.6z" fill="#e6e4e0"/><path d="M2.1 5H11.9C11.6 7 10.6 8.2 7.5 9.7H6.5C3.4 8.2 2.4 7 2.1 5z" fill="#9c7d5c"/><path d="M6.3 10H7.7C11.4 11.8 12.8 13.4 12.6 17.4H1.4C1.2 13.4 2.6 11.8 6.3 10z" fill="#eceaf3"/><path d="M7 13.2C8.8 14.6 11 15.8 11.8 17.4H2.2C3 15.8 5.2 14.6 7 13.2z" fill="#a47a44"/><rect x="0.3" y="0.2" width="13.4" height="2.6" rx="1.2" fill="url(#hg13)"/><rect x="0.3" y="17.2" width="13.4" height="2.6" rx="1.2" fill="url(#hg13)"/></svg><span style="margin-left:14.4px">PENDIENTE</span></div>
<div style="position:absolute;left:89.5px;top:1086px;width:63.5px;height:40px;background:#ece8fc;"></div>
<div style="position:absolute;left:153px;top:1086px;width:1904.5px;height:40px;background:#fefbe8;"></div>
<div style="position:absolute;left:2057.5px;top:1086px;width:692.5px;height:40px;background:#fefbe8;"></div>
<div style="position:absolute;left:89.5px;top:1086px;width:63.5px;height:40px;display:flex;align-items:center;justify-content:center;font-family:'Liberation Sans', sans-serif;font-size:20.3px;color:#4a2191;font-weight:bold;white-space:nowrap;overflow:hidden;padding-left:0px;box-sizing:border-box;-webkit-text-stroke:0.35px #4a2191;">12</div>
<div style="position:absolute;left:153px;top:1086px;width:521.5px;height:40px;display:flex;align-items:center;justify-content:flex-start;font-family:'Liberation Sans', sans-serif;font-size:20.3px;color:#1b1034;font-weight:bold;white-space:nowrap;overflow:hidden;padding-left:5.5px;box-sizing:border-box;-webkit-text-stroke:0.35px #1b1034;">Dominio / Hosting web</div>
<div style="position:absolute;left:674.5px;top:1086px;width:149.5px;height:40px;display:flex;align-items:center;justify-content:center;font-family:'Liberation Sans', sans-serif;font-size:20.3px;color:#5f6673;font-weight:normal;white-space:nowrap;overflow:hidden;padding-left:0px;box-sizing:border-box;">Negocio</div>
<div style="position:absolute;left:824px;top:1086px;width:306.5px;height:40px;display:flex;align-items:center;justify-content:center;font-family:'Liberation Sans', sans-serif;font-size:20.3px;color:#1b1034;font-weight:bold;white-space:nowrap;overflow:hidden;padding-left:0px;box-sizing:border-box;-webkit-text-stroke:0.35px #1b1034;">28/04/2026</div>
<div style="position:absolute;left:1130.5px;top:1086px;width:149.5px;height:40px;display:flex;align-items:center;justify-content:center;font-family:'Liberation Sans', sans-serif;font-size:20.3px;color:#4a2191;font-weight:bold;white-space:nowrap;overflow:hidden;padding-left:0px;box-sizing:border-box;-webkit-text-stroke:0.35px #4a2191;">$15,00</div>
<div style="position:absolute;left:1601px;top:1086px;width:456.5px;height:40px;display:flex;align-items:center;justify-content:center;font-family:'Liberation Sans', sans-serif;font-size:20.3px;color:#283d8c;font-weight:normal;white-space:nowrap;overflow:hidden;padding-left:0px;box-sizing:border-box;">Tarjeta</div>
<div style="position:absolute;left:1280px;top:1086px;width:321px;height:40px;display:flex;align-items:center;justify-content:center;font-family:'Liberation Sans', sans-serif;font-size:20.3px;color:#8a4b14;font-weight:bold;white-space:nowrap;overflow:hidden;padding-left:0px;box-sizing:border-box;-webkit-text-stroke:0.35px #8a4b14;"><span style="flex:none;display:inline-block;position:relative;top:-1.5px;width:21px;height:21px;border-radius:50%;box-shadow:inset 0 0 0 1px #e3ae30;background:radial-gradient(circle at 45% 25%,#fff0a0 0%,#f8d848 70%,#e3ae30 100%);"></span><span style="margin-left:11.5px">Media</span></div>
<div style="position:absolute;left:2057.5px;top:1086px;width:692.5px;height:40px;display:flex;align-items:center;justify-content:center;font-family:'Liberation Sans', sans-serif;font-size:20.3px;color:#8a4b14;font-weight:bold;white-space:nowrap;overflow:hidden;padding-left:0px;box-sizing:border-box;-webkit-text-stroke:0.35px #8a4b14;"><svg width="14.00" height="20" viewBox="0 0 14 20" style="flex:none;position:relative;top:-1.6px"><defs><linearGradient id="hg14" x1="0" x2="1"><stop offset="0" stop-color="#b8734a"/><stop offset="0.55" stop-color="#6a3416"/><stop offset="1" stop-color="#1e0600"/></linearGradient></defs><path d="M1.4 2.6H12.6C12.8 6.6 11.4 8.2 7.7 10H6.3C2.6 8.2 1.2 6.6 1.4 2.6z" fill="#e6e4e0"/><path d="M2.1 5H11.9C11.6 7 10.6 8.2 7.5 9.7H6.5C3.4 8.2 2.4 7 2.1 5z" fill="#9c7d5c"/><path d="M6.3 10H7.7C11.4 11.8 12.8 13.4 12.6 17.4H1.4C1.2 13.4 2.6 11.8 6.3 10z" fill="#eceaf3"/><path d="M7 13.2C8.8 14.6 11 15.8 11.8 17.4H2.2C3 15.8 5.2 14.6 7 13.2z" fill="#a47a44"/><rect x="0.3" y="0.2" width="13.4" height="2.6" rx="1.2" fill="url(#hg14)"/><rect x="0.3" y="17.2" width="13.4" height="2.6" rx="1.2" fill="url(#hg14)"/></svg><span style="margin-left:14.4px">PENDIENTE</span></div>
<div style="position:absolute;left:89.5px;top:1126px;width:63.5px;height:39px;background:#ece8fc;"></div>
<div style="position:absolute;left:153px;top:1126px;width:1904.5px;height:39px;background:#fefbe8;"></div>
<div style="position:absolute;left:2057.5px;top:1126px;width:692.5px;height:39px;background:#fefbe8;"></div>
<div style="position:absolute;left:89.5px;top:1126px;width:63.5px;height:39px;display:flex;align-items:center;justify-content:center;font-family:'Liberation Sans', sans-serif;font-size:20.3px;color:#4a2191;font-weight:bold;white-space:nowrap;overflow:hidden;padding-left:0px;box-sizing:border-box;-webkit-text-stroke:0.35px #4a2191;">13</div>
<div style="position:absolute;left:153px;top:1126px;width:521.5px;height:39px;display:flex;align-items:center;justify-content:flex-start;font-family:'Liberation Sans', sans-serif;font-size:20.3px;color:#1b1034;font-weight:bold;white-space:nowrap;overflow:hidden;padding-left:5.5px;box-sizing:border-box;-webkit-text-stroke:0.35px #1b1034;">Meta Ads — publicidad</div>
<div style="position:absolute;left:674.5px;top:1126px;width:149.5px;height:39px;display:flex;align-items:center;justify-content:center;font-family:'Liberation Sans', sans-serif;font-size:20.3px;color:#5f6673;font-weight:normal;white-space:nowrap;overflow:hidden;padding-left:0px;box-sizing:border-box;">Negocio</div>
<div style="position:absolute;left:824px;top:1126px;width:306.5px;height:39px;display:flex;align-items:center;justify-content:center;font-family:'Liberation Sans', sans-serif;font-size:20.3px;color:#1b1034;font-weight:bold;white-space:nowrap;overflow:hidden;padding-left:0px;box-sizing:border-box;-webkit-text-stroke:0.35px #1b1034;">30/04/2026</div>
<div style="position:absolute;left:1130.5px;top:1126px;width:149.5px;height:39px;display:flex;align-items:center;justify-content:center;font-family:'Liberation Sans', sans-serif;font-size:20.3px;color:#4a2191;font-weight:bold;white-space:nowrap;overflow:hidden;padding-left:0px;box-sizing:border-box;-webkit-text-stroke:0.35px #4a2191;">$50,00</div>
<div style="position:absolute;left:1601px;top:1126px;width:456.5px;height:39px;display:flex;align-items:center;justify-content:center;font-family:'Liberation Sans', sans-serif;font-size:20.3px;color:#283d8c;font-weight:normal;white-space:nowrap;overflow:hidden;padding-left:0px;box-sizing:border-box;">Tarjeta</div>
<div style="position:absolute;left:1280px;top:1126px;width:321px;height:39px;display:flex;align-items:center;justify-content:center;font-family:'Liberation Sans', sans-serif;font-size:20.3px;color:#8a4b14;font-weight:bold;white-space:nowrap;overflow:hidden;padding-left:0px;box-sizing:border-box;-webkit-text-stroke:0.35px #8a4b14;"><span style="flex:none;display:inline-block;position:relative;top:-1.5px;width:21px;height:21px;border-radius:50%;box-shadow:inset 0 0 0 1px #e3ae30;background:radial-gradient(circle at 45% 25%,#fff0a0 0%,#f8d848 70%,#e3ae30 100%);"></span><span style="margin-left:11.5px">Media</span></div>
<div style="position:absolute;left:2057.5px;top:1126px;width:692.5px;height:39px;display:flex;align-items:center;justify-content:center;font-family:'Liberation Sans', sans-serif;font-size:20.3px;color:#8a4b14;font-weight:bold;white-space:nowrap;overflow:hidden;padding-left:0px;box-sizing:border-box;-webkit-text-stroke:0.35px #8a4b14;"><svg width="14.00" height="20" viewBox="0 0 14 20" style="flex:none;position:relative;top:-1.6px"><defs><linearGradient id="hg15" x1="0" x2="1"><stop offset="0" stop-color="#b8734a"/><stop offset="0.55" stop-color="#6a3416"/><stop offset="1" stop-color="#1e0600"/></linearGradient></defs><path d="M1.4 2.6H12.6C12.8 6.6 11.4 8.2 7.7 10H6.3C2.6 8.2 1.2 6.6 1.4 2.6z" fill="#e6e4e0"/><path d="M2.1 5H11.9C11.6 7 10.6 8.2 7.5 9.7H6.5C3.4 8.2 2.4 7 2.1 5z" fill="#9c7d5c"/><path d="M6.3 10H7.7C11.4 11.8 12.8 13.4 12.6 17.4H1.4C1.2 13.4 2.6 11.8 6.3 10z" fill="#eceaf3"/><path d="M7 13.2C8.8 14.6 11 15.8 11.8 17.4H2.2C3 15.8 5.2 14.6 7 13.2z" fill="#a47a44"/><rect x="0.3" y="0.2" width="13.4" height="2.6" rx="1.2" fill="url(#hg15)"/><rect x="0.3" y="17.2" width="13.4" height="2.6" rx="1.2" fill="url(#hg15)"/></svg><span style="margin-left:14.4px">PENDIENTE</span></div>
<div style="position:absolute;left:89.5px;top:1165px;width:63.5px;height:40px;background:#ece8fc;"></div>
<div style="position:absolute;left:153px;top:1165px;width:1904.5px;height:40px;background:#fefbe8;"></div>
<div style="position:absolute;left:2057.5px;top:1165px;width:692.5px;height:40px;background:#fefbe8;"></div>
<div style="position:absolute;left:89.5px;top:1165px;width:63.5px;height:40px;display:flex;align-items:center;justify-content:center;font-family:'Liberation Sans', sans-serif;font-size:20.3px;color:#4a2191;font-weight:bold;white-space:nowrap;overflow:hidden;padding-left:0px;box-sizing:border-box;-webkit-text-stroke:0.35px #4a2191;">14</div>
<div style="position:absolute;left:153px;top:1165px;width:521.5px;height:40px;display:flex;align-items:center;justify-content:flex-start;font-family:'Liberation Sans', sans-serif;font-size:20.3px;color:#1b1034;font-weight:bold;white-space:nowrap;overflow:hidden;padding-left:5.5px;box-sizing:border-box;-webkit-text-stroke:0.35px #1b1034;">Insumos negocio mensual</div>
<div style="position:absolute;left:674.5px;top:1165px;width:149.5px;height:40px;display:flex;align-items:center;justify-content:center;font-family:'Liberation Sans', sans-serif;font-size:20.3px;color:#5f6673;font-weight:normal;white-space:nowrap;overflow:hidden;padding-left:0px;box-sizing:border-box;">Negocio</div>
<div style="position:absolute;left:824px;top:1165px;width:306.5px;height:40px;display:flex;align-items:center;justify-content:center;font-family:'Liberation Sans', sans-serif;font-size:20.3px;color:#1b1034;font-weight:bold;white-space:nowrap;overflow:hidden;padding-left:0px;box-sizing:border-box;-webkit-text-stroke:0.35px #1b1034;">30/04/2026</div>
<div style="position:absolute;left:1130.5px;top:1165px;width:149.5px;height:40px;display:flex;align-items:center;justify-content:center;font-family:'Liberation Sans', sans-serif;font-size:20.3px;color:#4a2191;font-weight:bold;white-space:nowrap;overflow:hidden;padding-left:0px;box-sizing:border-box;-webkit-text-stroke:0.35px #4a2191;">$80,00</div>
<div style="position:absolute;left:1601px;top:1165px;width:456.5px;height:40px;display:flex;align-items:center;justify-content:center;font-family:'Liberation Sans', sans-serif;font-size:20.3px;color:#283d8c;font-weight:normal;white-space:nowrap;overflow:hidden;padding-left:0px;box-sizing:border-box;">Efectivo</div>
<div style="position:absolute;left:1280px;top:1165px;width:321px;height:40px;display:flex;align-items:center;justify-content:center;font-family:'Liberation Sans', sans-serif;font-size:20.3px;color:#8a4b14;font-weight:bold;white-space:nowrap;overflow:hidden;padding-left:0px;box-sizing:border-box;-webkit-text-stroke:0.35px #8a4b14;"><span style="flex:none;display:inline-block;position:relative;top:-1.5px;width:21px;height:21px;border-radius:50%;box-shadow:inset 0 0 0 1px #e3ae30;background:radial-gradient(circle at 45% 25%,#fff0a0 0%,#f8d848 70%,#e3ae30 100%);"></span><span style="margin-left:11.5px">Media</span></div>
<div style="position:absolute;left:2057.5px;top:1165px;width:692.5px;height:40px;display:flex;align-items:center;justify-content:center;font-family:'Liberation Sans', sans-serif;font-size:20.3px;color:#8a4b14;font-weight:bold;white-space:nowrap;overflow:hidden;padding-left:0px;box-sizing:border-box;-webkit-text-stroke:0.35px #8a4b14;"><svg width="14.00" height="20" viewBox="0 0 14 20" style="flex:none;position:relative;top:-1.6px"><defs><linearGradient id="hg16" x1="0" x2="1"><stop offset="0" stop-color="#b8734a"/><stop offset="0.55" stop-color="#6a3416"/><stop offset="1" stop-color="#1e0600"/></linearGradient></defs><path d="M1.4 2.6H12.6C12.8 6.6 11.4 8.2 7.7 10H6.3C2.6 8.2 1.2 6.6 1.4 2.6z" fill="#e6e4e0"/><path d="M2.1 5H11.9C11.6 7 10.6 8.2 7.5 9.7H6.5C3.4 8.2 2.4 7 2.1 5z" fill="#9c7d5c"/><path d="M6.3 10H7.7C11.4 11.8 12.8 13.4 12.6 17.4H1.4C1.2 13.4 2.6 11.8 6.3 10z" fill="#eceaf3"/><path d="M7 13.2C8.8 14.6 11 15.8 11.8 17.4H2.2C3 15.8 5.2 14.6 7 13.2z" fill="#a47a44"/><rect x="0.3" y="0.2" width="13.4" height="2.6" rx="1.2" fill="url(#hg16)"/><rect x="0.3" y="17.2" width="13.4" height="2.6" rx="1.2" fill="url(#hg16)"/></svg><span style="margin-left:14.4px">PENDIENTE</span></div>
<div style="position:absolute;left:89.5px;top:1205px;width:63.5px;height:40px;background:#ece8fc;"></div>
<div style="position:absolute;left:153px;top:1205px;width:1904.5px;height:40px;background:#fefbe8;"></div>
<div style="position:absolute;left:2057.5px;top:1205px;width:692.5px;height:40px;background:#fefbe8;"></div>
<div style="position:absolute;left:89.5px;top:1205px;width:63.5px;height:40px;display:flex;align-items:center;justify-content:center;font-family:'Liberation Sans', sans-serif;font-size:20.3px;color:#4a2191;font-weight:bold;white-space:nowrap;overflow:hidden;padding-left:0px;box-sizing:border-box;-webkit-text-stroke:0.35px #4a2191;">15</div>
<div style="position:absolute;left:153px;top:1205px;width:521.5px;height:40px;display:flex;align-items:center;justify-content:flex-start;font-family:'Liberation Sans', sans-serif;font-size:20.3px;color:#1b1034;font-weight:bold;white-space:nowrap;overflow:hidden;padding-left:5.5px;box-sizing:border-box;-webkit-text-stroke:0.35px #1b1034;">Pago a colaboradora</div>
<div style="position:absolute;left:674.5px;top:1205px;width:149.5px;height:40px;display:flex;align-items:center;justify-content:center;font-family:'Liberation Sans', sans-serif;font-size:20.3px;color:#5f6673;font-weight:normal;white-space:nowrap;overflow:hidden;padding-left:0px;box-sizing:border-box;">Personal</div>
<div style="position:absolute;left:824px;top:1205px;width:306.5px;height:40px;display:flex;align-items:center;justify-content:center;font-family:'Liberation Sans', sans-serif;font-size:20.3px;color:#1b1034;font-weight:bold;white-space:nowrap;overflow:hidden;padding-left:0px;box-sizing:border-box;-webkit-text-stroke:0.35px #1b1034;">30/04/2026</div>
<div style="position:absolute;left:1130.5px;top:1205px;width:149.5px;height:40px;display:flex;align-items:center;justify-content:center;font-family:'Liberation Sans', sans-serif;font-size:20.3px;color:#4a2191;font-weight:bold;white-space:nowrap;overflow:hidden;padding-left:0px;box-sizing:border-box;-webkit-text-stroke:0.35px #4a2191;">$100,00</div>
<div style="position:absolute;left:1601px;top:1205px;width:456.5px;height:40px;display:flex;align-items:center;justify-content:center;font-family:'Liberation Sans', sans-serif;font-size:20.3px;color:#283d8c;font-weight:normal;white-space:nowrap;overflow:hidden;padding-left:0px;box-sizing:border-box;">Transferencia</div>
<div style="position:absolute;left:1280px;top:1205px;width:321px;height:40px;display:flex;align-items:center;justify-content:center;font-family:'Liberation Sans', sans-serif;font-size:20.3px;color:#8a4b14;font-weight:bold;white-space:nowrap;overflow:hidden;padding-left:0px;box-sizing:border-box;-webkit-text-stroke:0.35px #8a4b14;"><span style="flex:none;display:inline-block;position:relative;top:-1.5px;width:21px;height:21px;border-radius:50%;box-shadow:inset 0 0 0 1px #e3ae30;background:radial-gradient(circle at 45% 25%,#fff0a0 0%,#f8d848 70%,#e3ae30 100%);"></span><span style="margin-left:11.5px">Media</span></div>
<div style="position:absolute;left:2057.5px;top:1205px;width:692.5px;height:40px;display:flex;align-items:center;justify-content:center;font-family:'Liberation Sans', sans-serif;font-size:20.3px;color:#8a4b14;font-weight:bold;white-space:nowrap;overflow:hidden;padding-left:0px;box-sizing:border-box;-webkit-text-stroke:0.35px #8a4b14;"><svg width="14.00" height="20" viewBox="0 0 14 20" style="flex:none;position:relative;top:-1.6px"><defs><linearGradient id="hg17" x1="0" x2="1"><stop offset="0" stop-color="#b8734a"/><stop offset="0.55" stop-color="#6a3416"/><stop offset="1" stop-color="#1e0600"/></linearGradient></defs><path d="M1.4 2.6H12.6C12.8 6.6 11.4 8.2 7.7 10H6.3C2.6 8.2 1.2 6.6 1.4 2.6z" fill="#e6e4e0"/><path d="M2.1 5H11.9C11.6 7 10.6 8.2 7.5 9.7H6.5C3.4 8.2 2.4 7 2.1 5z" fill="#9c7d5c"/><path d="M6.3 10H7.7C11.4 11.8 12.8 13.4 12.6 17.4H1.4C1.2 13.4 2.6 11.8 6.3 10z" fill="#eceaf3"/><path d="M7 13.2C8.8 14.6 11 15.8 11.8 17.4H2.2C3 15.8 5.2 14.6 7 13.2z" fill="#a47a44"/><rect x="0.3" y="0.2" width="13.4" height="2.6" rx="1.2" fill="url(#hg17)"/><rect x="0.3" y="17.2" width="13.4" height="2.6" rx="1.2" fill="url(#hg17)"/></svg><span style="margin-left:14.4px">PENDIENTE</span></div>
<div style="position:absolute;left:89.5px;top:1245px;width:63.5px;height:39px;background:#ece8fc;"></div>
<div style="position:absolute;left:153px;top:1245px;width:1904.5px;height:39px;background:#fefbe8;"></div>
<div style="position:absolute;left:2057.5px;top:1245px;width:692.5px;height:39px;background:#fefbe8;"></div>
<div style="position:absolute;left:89.5px;top:1245px;width:63.5px;height:39px;display:flex;align-items:center;justify-content:center;font-family:'Liberation Sans', sans-serif;font-size:20.3px;color:#4a2191;font-weight:bold;white-space:nowrap;overflow:hidden;padding-left:0px;box-sizing:border-box;-webkit-text-stroke:0.35px #4a2191;">16</div>
<div style="position:absolute;left:1280px;top:1245px;width:321px;height:39px;display:flex;align-items:center;justify-content:center;font-family:'Liberation Sans', sans-serif;font-size:20.3px;color:#8a4b14;font-weight:bold;white-space:nowrap;overflow:hidden;padding-left:0px;box-sizing:border-box;-webkit-text-stroke:0.35px #8a4b14;"><span style="flex:none;display:inline-block;position:relative;top:-1.5px;width:21px;height:21px;border-radius:50%;box-shadow:inset 0 0 0 1px #e3ae30;background:radial-gradient(circle at 45% 25%,#fff0a0 0%,#f8d848 70%,#e3ae30 100%);"></span><span style="margin-left:11.5px">Media</span></div>
<div style="position:absolute;left:2057.5px;top:1245px;width:692.5px;height:39px;display:flex;align-items:center;justify-content:center;font-family:'Liberation Sans', sans-serif;font-size:20.3px;color:#8a4b14;font-weight:bold;white-space:nowrap;overflow:hidden;padding-left:0px;box-sizing:border-box;-webkit-text-stroke:0.35px #8a4b14;"><svg width="14.00" height="20" viewBox="0 0 14 20" style="flex:none;position:relative;top:-1.6px"><defs><linearGradient id="hg18" x1="0" x2="1"><stop offset="0" stop-color="#b8734a"/><stop offset="0.55" stop-color="#6a3416"/><stop offset="1" stop-color="#1e0600"/></linearGradient></defs><path d="M1.4 2.6H12.6C12.8 6.6 11.4 8.2 7.7 10H6.3C2.6 8.2 1.2 6.6 1.4 2.6z" fill="#e6e4e0"/><path d="M2.1 5H11.9C11.6 7 10.6 8.2 7.5 9.7H6.5C3.4 8.2 2.4 7 2.1 5z" fill="#9c7d5c"/><path d="M6.3 10H7.7C11.4 11.8 12.8 13.4 12.6 17.4H1.4C1.2 13.4 2.6 11.8 6.3 10z" fill="#eceaf3"/><path d="M7 13.2C8.8 14.6 11 15.8 11.8 17.4H2.2C3 15.8 5.2 14.6 7 13.2z" fill="#a47a44"/><rect x="0.3" y="0.2" width="13.4" height="2.6" rx="1.2" fill="url(#hg18)"/><rect x="0.3" y="17.2" width="13.4" height="2.6" rx="1.2" fill="url(#hg18)"/></svg><span style="margin-left:14.4px">PENDIENTE</span></div>
<div style="position:absolute;left:89.5px;top:1284px;width:63.5px;height:40px;background:#ece8fc;"></div>
<div style="position:absolute;left:153px;top:1284px;width:1904.5px;height:40px;background:#fefbe8;"></div>
<div style="position:absolute;left:2057.5px;top:1284px;width:692.5px;height:40px;background:#fefbe8;"></div>
<div style="position:absolute;left:89.5px;top:1284px;width:63.5px;height:40px;display:flex;align-items:center;justify-content:center;font-family:'Liberation Sans', sans-serif;font-size:20.3px;color:#4a2191;font-weight:bold;white-space:nowrap;overflow:hidden;padding-left:0px;box-sizing:border-box;-webkit-text-stroke:0.35px #4a2191;">17</div>
<div style="position:absolute;left:1280px;top:1284px;width:321px;height:40px;display:flex;align-items:center;justify-content:center;font-family:'Liberation Sans', sans-serif;font-size:20.3px;color:#8a4b14;font-weight:bold;white-space:nowrap;overflow:hidden;padding-left:0px;box-sizing:border-box;-webkit-text-stroke:0.35px #8a4b14;"><span style="flex:none;display:inline-block;position:relative;top:-1.5px;width:21px;height:21px;border-radius:50%;box-shadow:inset 0 0 0 1px #e3ae30;background:radial-gradient(circle at 45% 25%,#fff0a0 0%,#f8d848 70%,#e3ae30 100%);"></span><span style="margin-left:11.5px">Media</span></div>
<div style="position:absolute;left:2057.5px;top:1284px;width:692.5px;height:40px;display:flex;align-items:center;justify-content:center;font-family:'Liberation Sans', sans-serif;font-size:20.3px;color:#8a4b14;font-weight:bold;white-space:nowrap;overflow:hidden;padding-left:0px;box-sizing:border-box;-webkit-text-stroke:0.35px #8a4b14;"><svg width="14.00" height="20" viewBox="0 0 14 20" style="flex:none;position:relative;top:-1.6px"><defs><linearGradient id="hg19" x1="0" x2="1"><stop offset="0" stop-color="#b8734a"/><stop offset="0.55" stop-color="#6a3416"/><stop offset="1" stop-color="#1e0600"/></linearGradient></defs><path d="M1.4 2.6H12.6C12.8 6.6 11.4 8.2 7.7 10H6.3C2.6 8.2 1.2 6.6 1.4 2.6z" fill="#e6e4e0"/><path d="M2.1 5H11.9C11.6 7 10.6 8.2 7.5 9.7H6.5C3.4 8.2 2.4 7 2.1 5z" fill="#9c7d5c"/><path d="M6.3 10H7.7C11.4 11.8 12.8 13.4 12.6 17.4H1.4C1.2 13.4 2.6 11.8 6.3 10z" fill="#eceaf3"/><path d="M7 13.2C8.8 14.6 11 15.8 11.8 17.4H2.2C3 15.8 5.2 14.6 7 13.2z" fill="#a47a44"/><rect x="0.3" y="0.2" width="13.4" height="2.6" rx="1.2" fill="url(#hg19)"/><rect x="0.3" y="17.2" width="13.4" height="2.6" rx="1.2" fill="url(#hg19)"/></svg><span style="margin-left:14.4px">PENDIENTE</span></div>
<div style="position:absolute;left:89.5px;top:1324px;width:63.5px;height:40px;background:#ece8fc;"></div>
<div style="position:absolute;left:153px;top:1324px;width:1904.5px;height:40px;background:#fefbe8;"></div>
<div style="position:absolute;left:2057.5px;top:1324px;width:692.5px;height:40px;background:#fefbe8;"></div>
<div style="position:absolute;left:89.5px;top:1324px;width:63.5px;height:40px;display:flex;align-items:center;justify-content:center;font-family:'Liberation Sans', sans-serif;font-size:20.3px;color:#4a2191;font-weight:bold;white-space:nowrap;overflow:hidden;padding-left:0px;box-sizing:border-box;-webkit-text-stroke:0.35px #4a2191;">18</div>
<div style="position:absolute;left:1280px;top:1324px;width:321px;height:40px;display:flex;align-items:center;justify-content:center;font-family:'Liberation Sans', sans-serif;font-size:20.3px;color:#8a4b14;font-weight:bold;white-space:nowrap;overflow:hidden;padding-left:0px;box-sizing:border-box;-webkit-text-stroke:0.35px #8a4b14;"><span style="flex:none;display:inline-block;position:relative;top:-1.5px;width:21px;height:21px;border-radius:50%;box-shadow:inset 0 0 0 1px #e3ae30;background:radial-gradient(circle at 45% 25%,#fff0a0 0%,#f8d848 70%,#e3ae30 100%);"></span><span style="margin-left:11.5px">Media</span></div>
<div style="position:absolute;left:2057.5px;top:1324px;width:692.5px;height:40px;display:flex;align-items:center;justify-content:center;font-family:'Liberation Sans', sans-serif;font-size:20.3px;color:#8a4b14;font-weight:bold;white-space:nowrap;overflow:hidden;padding-left:0px;box-sizing:border-box;-webkit-text-stroke:0.35px #8a4b14;"><svg width="14.00" height="20" viewBox="0 0 14 20" style="flex:none;position:relative;top:-1.6px"><defs><linearGradient id="hg20" x1="0" x2="1"><stop offset="0" stop-color="#b8734a"/><stop offset="0.55" stop-color="#6a3416"/><stop offset="1" stop-color="#1e0600"/></linearGradient></defs><path d="M1.4 2.6H12.6C12.8 6.6 11.4 8.2 7.7 10H6.3C2.6 8.2 1.2 6.6 1.4 2.6z" fill="#e6e4e0"/><path d="M2.1 5H11.9C11.6 7 10.6 8.2 7.5 9.7H6.5C3.4 8.2 2.4 7 2.1 5z" fill="#9c7d5c"/><path d="M6.3 10H7.7C11.4 11.8 12.8 13.4 12.6 17.4H1.4C1.2 13.4 2.6 11.8 6.3 10z" fill="#eceaf3"/><path d="M7 13.2C8.8 14.6 11 15.8 11.8 17.4H2.2C3 15.8 5.2 14.6 7 13.2z" fill="#a47a44"/><rect x="0.3" y="0.2" width="13.4" height="2.6" rx="1.2" fill="url(#hg20)"/><rect x="0.3" y="17.2" width="13.4" height="2.6" rx="1.2" fill="url(#hg20)"/></svg><span style="margin-left:14.4px">PENDIENTE</span></div>
<div style="position:absolute;left:89.5px;top:1364px;width:63.5px;height:39px;background:#ece8fc;"></div>
<div style="position:absolute;left:153px;top:1364px;width:1904.5px;height:39px;background:#fefbe8;"></div>
<div style="position:absolute;left:2057.5px;top:1364px;width:692.5px;height:39px;background:#fefbe8;"></div>
<div style="position:absolute;left:89.5px;top:1364px;width:63.5px;height:39px;display:flex;align-items:center;justify-content:center;font-family:'Liberation Sans', sans-serif;font-size:20.3px;color:#4a2191;font-weight:bold;white-space:nowrap;overflow:hidden;padding-left:0px;box-sizing:border-box;-webkit-text-stroke:0.35px #4a2191;">19</div>
<div style="position:absolute;left:1280px;top:1364px;width:321px;height:39px;display:flex;align-items:center;justify-content:center;font-family:'Liberation Sans', sans-serif;font-size:20.3px;color:#8a4b14;font-weight:bold;white-space:nowrap;overflow:hidden;padding-left:0px;box-sizing:border-box;-webkit-text-stroke:0.35px #8a4b14;"><span style="flex:none;display:inline-block;position:relative;top:-1.5px;width:21px;height:21px;border-radius:50%;box-shadow:inset 0 0 0 1px #e3ae30;background:radial-gradient(circle at 45% 25%,#fff0a0 0%,#f8d848 70%,#e3ae30 100%);"></span><span style="margin-left:11.5px">Media</span></div>
<div style="position:absolute;left:2057.5px;top:1364px;width:692.5px;height:39px;display:flex;align-items:center;justify-content:center;font-family:'Liberation Sans', sans-serif;font-size:20.3px;color:#8a4b14;font-weight:bold;white-space:nowrap;overflow:hidden;padding-left:0px;box-sizing:border-box;-webkit-text-stroke:0.35px #8a4b14;"><svg width="14.00" height="20" viewBox="0 0 14 20" style="flex:none;position:relative;top:-1.6px"><defs><linearGradient id="hg21" x1="0" x2="1"><stop offset="0" stop-color="#b8734a"/><stop offset="0.55" stop-color="#6a3416"/><stop offset="1" stop-color="#1e0600"/></linearGradient></defs><path d="M1.4 2.6H12.6C12.8 6.6 11.4 8.2 7.7 10H6.3C2.6 8.2 1.2 6.6 1.4 2.6z" fill="#e6e4e0"/><path d="M2.1 5H11.9C11.6 7 10.6 8.2 7.5 9.7H6.5C3.4 8.2 2.4 7 2.1 5z" fill="#9c7d5c"/><path d="M6.3 10H7.7C11.4 11.8 12.8 13.4 12.6 17.4H1.4C1.2 13.4 2.6 11.8 6.3 10z" fill="#eceaf3"/><path d="M7 13.2C8.8 14.6 11 15.8 11.8 17.4H2.2C3 15.8 5.2 14.6 7 13.2z" fill="#a47a44"/><rect x="0.3" y="0.2" width="13.4" height="2.6" rx="1.2" fill="url(#hg21)"/><rect x="0.3" y="17.2" width="13.4" height="2.6" rx="1.2" fill="url(#hg21)"/></svg><span style="margin-left:14.4px">PENDIENTE</span></div>
<div style="position:absolute;left:89.5px;top:689.0px;width:2660.5px;height:2px;background:#d6d9df;"></div>
<div style="position:absolute;left:89.5px;top:729.0px;width:2660.5px;height:2px;background:#d6d9df;"></div>
<div style="position:absolute;left:89.5px;top:768.0px;width:2660.5px;height:2px;background:#d6d9df;"></div>
<div style="position:absolute;left:89.5px;top:808.0px;width:2660.5px;height:2px;background:#d6d9df;"></div>
<div style="position:absolute;left:89.5px;top:847.0px;width:2660.5px;height:2px;background:#d6d9df;"></div>
<div style="position:absolute;left:89.5px;top:887.0px;width:2660.5px;height:2px;background:#d6d9df;"></div>
<div style="position:absolute;left:89.5px;top:927.0px;width:2660.5px;height:2px;background:#d6d9df;"></div>
<div style="position:absolute;left:89.5px;top:966.0px;width:2660.5px;height:2px;background:#d6d9df;"></div>
<div style="position:absolute;left:89.5px;top:1006.0px;width:2660.5px;height:2px;background:#d6d9df;"></div>
<div style="position:absolute;left:89.5px;top:1046.0px;width:2660.5px;height:2px;background:#d6d9df;"></div>
<div style="position:absolute;left:89.5px;top:1085.0px;width:2660.5px;height:2px;background:#d6d9df;"></div>
<div style="position:absolute;left:89.5px;top:1125.0px;width:2660.5px;height:2px;background:#d6d9df;"></div>
<div style="position:absolute;left:89.5px;top:1164.0px;width:2660.5px;height:2px;background:#d6d9df;"></div>
<div style="position:absolute;left:89.5px;top:1204.0px;width:2660.5px;height:2px;background:#d6d9df;"></div>
<div style="position:absolute;left:89.5px;top:1244.0px;width:2660.5px;height:2px;background:#d6d9df;"></div>
<div style="position:absolute;left:89.5px;top:1283.0px;width:2660.5px;height:2px;background:#d6d9df;"></div>
<div style="position:absolute;left:89.5px;top:1323.0px;width:2660.5px;height:2px;background:#d6d9df;"></div>
<div style="position:absolute;left:89.5px;top:1363.0px;width:2660.5px;height:2px;background:#d6d9df;"></div>
<div style="position:absolute;left:89.5px;top:1402.0px;width:2660.5px;height:2px;background:#d6d9df;"></div>
<div style="position:absolute;left:88.5px;top:650px;width:2px;height:753px;background:#d6d9df;"></div>
<div style="position:absolute;left:152.0px;top:650px;width:2px;height:753px;background:#d6d9df;"></div>
<div style="position:absolute;left:673.5px;top:650px;width:2px;height:753px;background:#d6d9df;"></div>
<div style="position:absolute;left:823.0px;top:650px;width:2px;height:753px;background:#d6d9df;"></div>
<div style="position:absolute;left:1129.5px;top:650px;width:2px;height:753px;background:#d6d9df;"></div>
<div style="position:absolute;left:1279.0px;top:650px;width:2px;height:753px;background:#d6d9df;"></div>
<div style="position:absolute;left:1600.0px;top:650px;width:2px;height:753px;background:#d6d9df;"></div>
<div style="position:absolute;left:2056.5px;top:650px;width:2px;height:753px;background:#d6d9df;"></div>
</div></div>
<div style="position:absolute;left:70px;top:248px;width:20.5px;height:85.5px;border-style:solid;border-color:#0b57d0;border-width:0 3px 3px 2px;"></div>
<div style="position:absolute;left:2543px;top:213px;width:2px;height:1173px;background:#c7c7c7;"></div>
<div style="position:absolute;left:2545px;top:213px;width:15px;height:1173px;background:#fff;"></div>
<div style="position:absolute;left:2545px;top:213px;width:15px;height:35px;background:#f8f9fa;"></div>
<div style="position:absolute;left:2545px;top:247px;width:15px;height:2px;background:#c7c7c7;"></div>
<div style="position:absolute;left:2546px;top:250px;width:14px;height:40px;background:#dadce0;border-radius:7px;"></div>
<div style="position:absolute;left:2545px;top:1337px;width:15px;height:49px;background:#f8f8f8;"></div>
<div style="position:absolute;left:2545px;top:1337px;width:15px;height:1.5px;background:#d0d0d0;"></div>
<div style="position:absolute;left:2545px;top:1361px;width:15px;height:1.5px;background:#d0d0d0;"></div>
<svg style="position:absolute;left:2549.0px;top:1346.0px" width="8" height="5" viewBox="0 0 10 6"><path d="M0 6h10L5 0z" fill="#9aa0a6"/></svg>
<svg style="position:absolute;left:2549.0px;top:1371.5px" width="8" height="5" viewBox="0 0 10 6"><path d="M0 0h10L5 6z" fill="#9aa0a6"/></svg>
<div style="position:absolute;left:0px;top:1386px;width:2560px;height:20px;background:#fff;"></div>
<div style="position:absolute;left:0px;top:1386px;width:70px;height:20px;background:#f8f9fa;"></div>
<div style="position:absolute;left:69px;top:1386px;width:2px;height:20px;background:#c7c7c7;"></div>
<div style="position:absolute;left:0px;top:1385.5px;width:2560px;height:1.5px;background:#c9cbce;"></div>
<div style="position:absolute;left:74px;top:1389px;width:1425px;height:14px;background:#dadce0;border-radius:7px;"></div>
<div style="position:absolute;left:2497px;top:1387px;width:47px;height:19px;background:#f8f8f8;"></div>
<div style="position:absolute;left:2496.5px;top:1387px;width:1.5px;height:19px;background:#d0d0d0;"></div>
<div style="position:absolute;left:2520.5px;top:1387px;width:1.5px;height:19px;background:#d0d0d0;"></div>
<div style="position:absolute;left:2543px;top:1386px;width:2.5px;height:19px;background:#c7c7c7;"></div>
<div style="position:absolute;left:2545.5px;top:1387px;width:15px;height:19px;background:#f8f8f8;"></div>
<svg style="position:absolute;left:2504.8px;top:1392.0px" width="5" height="8" viewBox="0 0 6 10"><path d="M6 0v10L0 5z" fill="#9aa0a6"/></svg>
<svg style="position:absolute;left:2530.4px;top:1392.0px" width="5" height="8" viewBox="0 0 6 10"><path d="M0 0v10l6-5z" fill="#9aa0a6"/></svg>
<div style="position:absolute;left:0px;top:1406px;width:2560px;height:56px;background:#f9fbfd;"></div>
<div style="position:absolute;left:0px;top:1405px;width:2560px;height:1.8px;background:#c9cbce;"></div>
<div style="position:absolute;left:86.4px;top:1434.3px;width:14.5px;height:2.2px;background:#444746;"></div>
<div style="position:absolute;left:92.5px;top:1428px;width:2.2px;height:14.6px;background:#444746;"></div>
<div style="position:absolute;left:144.2px;top:1428.4px;width:21px;height:2.3px;background:#444746;border-radius:1px;"></div>
<div style="position:absolute;left:144.2px;top:1434.0px;width:21px;height:2.3px;background:#444746;border-radius:1px;"></div>
<div style="position:absolute;left:144.2px;top:1439.9px;width:21px;height:2.3px;background:#444746;border-radius:1px;"></div>
<div style="position:absolute;left:443px;top:1407px;width:213px;height:55px;background:#e1e5ec;"></div>
<div style="position:absolute;left:896px;top:1407px;width:172px;height:55px;background:#ececec;"></div>
<div style="position:absolute;left:224px;top:1422px"><svg width="19" height="22" viewBox="0 0 19 22" style="flex:none;position:relative;top:-1px"><defs><linearGradient id="pg22" x1="0" y1="0" x2="0" y2="1"><stop offset="0" stop-color="#d0d0d0"/><stop offset="0.6" stop-color="#cfcfcf"/><stop offset="1" stop-color="#f4f4f4"/></linearGradient></defs><rect x="0.4" y="2.4" width="18.2" height="19.2" rx="1.2" fill="#b58c4c"/><rect x="1.8" y="3.4" width="15.4" height="16.4" fill="url(#pg22)"/><rect x="0.4" y="19.6" width="18.2" height="2" fill="#6e5436"/><path d="M6.5 3.6L9.5 0.2 12.5 3.6z" fill="#c6c2d6"/><rect x="2.5" y="3.4" width="14" height="1.4" fill="#d8dadb"/><rect x="2.5" y="4.8" width="14" height="0.9" fill="#9c9a96"/></svg></div>
<div style="position:absolute;left:252px;top:1409px;width:168px;height:55px;display:flex;align-items:center;justify-content:flex-start;font-family:'Liberation Sans', sans-serif;font-size:24.4px;color:#444746;font-weight:normal;white-space:nowrap;overflow:hidden;padding-left:0px;box-sizing:border-box;">Instrucciones</div>
<svg style="position:absolute;left:0;top:1400px" width="2560" height="62" viewBox="0 1400 2560 62"><path d="M411.5 1431.5H424.5L418.0 1438.5z" fill="#444746"/><path d="M625.5 1432.5H637.5L631.5 1439z" fill="#0b57d0"/><path d="M866 1431.5H879L872.5 1438.5z" fill="#444746"/><path d="M1036.5 1431.5H1049.5L1043.0 1438.5z" fill="#444746"/><path d="M1227.5 1431.5H1240.5L1234.0 1438.5z" fill="#444746"/><rect x="461.2" y="1424.6" width="21.2" height="20.2" rx="1" fill="#e9e9e9"/><rect x="461.2" y="1424.6" width="21.2" height="8.2" fill="#b5595a"/><circle cx="466" cy="1426.3" r="1" fill="#fff"/><circle cx="477.6" cy="1426.3" r="1" fill="#fff"/><text x="471.8" y="1443.2" font-size="11.5" text-anchor="middle" fill="#333" font-family="Liberation Sans">17</text><rect x="675.5" y="1426" width="19" height="19.4" rx="1" fill="#fff" stroke="#666" stroke-width="1"/><rect x="675.5" y="1426" width="19" height="7" fill="#c06060"/><circle cx="680" cy="1426.8" r="1.1" fill="#222"/><circle cx="690" cy="1426.8" r="1.1" fill="#222"/><text x="684" y="1443.2" font-size="10.5" text-anchor="middle" fill="#333" font-family="Liberation Sans">17</text><path d="M687 1444l7-6" stroke="#555" stroke-width="1.2"/><path d="M920.2 1444V1428.4a3 3 0 0 1 3-3h9a3 3 0 0 1 3 3V1444z" fill="#dc4434"/><rect x="920" y="1441.6" width="15.4" height="3.4" rx="1.2" fill="#9a9a9a"/><path d="M926 1430.2l.9 3 3-1-2 2.4 2 2.4-3-1-.9 3-.9-3-3 1 2-2.4-2-2.4 3 1z" fill="#fff" opacity="0.9"/><rect x="1090" y="1425" width="17" height="21" fill="#e6ebf2"/><rect x="1090.4" y="1432" width="4.8" height="14" rx="0.8" fill="#4db23a"/><rect x="1096.2" y="1436" width="4.8" height="10" rx="0.8" fill="#b02a1a"/><rect x="1102.2" y="1427.5" width="4.8" height="18.5" rx="0.8" fill="#2455b8"/></svg>
<div style="position:absolute;left:489px;top:1409px;width:131px;height:55px;display:flex;align-items:center;justify-content:flex-start;font-family:'Liberation Sans', sans-serif;font-size:24.3px;color:#0b57d0;font-weight:normal;white-space:nowrap;overflow:hidden;padding-left:0px;box-sizing:border-box;-webkit-text-stroke:0.45px #0b57d0;">Calendario</div>
<div style="position:absolute;left:702px;top:1409px;width:158px;height:55px;display:flex;align-items:center;justify-content:flex-start;font-family:'Liberation Sans', sans-serif;font-size:23.1px;color:#444746;font-weight:normal;white-space:nowrap;overflow:hidden;padding-left:0px;box-sizing:border-box;">Vista Semanal</div>
<div style="position:absolute;left:944px;top:1409px;width:96px;height:55px;display:flex;align-items:center;justify-content:flex-start;font-family:'Liberation Sans', sans-serif;font-size:24.1px;color:#444746;font-weight:normal;white-space:nowrap;overflow:hidden;padding-left:0px;box-sizing:border-box;">Alertas</div>
<div style="position:absolute;left:1115px;top:1409px;width:105px;height:55px;display:flex;align-items:center;justify-content:flex-start;font-family:'Liberation Sans', sans-serif;font-size:22.7px;color:#444746;font-weight:normal;white-space:nowrap;overflow:hidden;padding-left:0px;box-sizing:border-box;">Resumen</div>
<svg style="position:absolute;left:2513.5px;top:1428.9px" width="10" height="17" viewBox="0 0 10 17"><path d="M8.2 1.2L1.8 8.5l6.4 7.3" fill="none" stroke="#444746" stroke-width="2.4"/></svg>
</body></html>
